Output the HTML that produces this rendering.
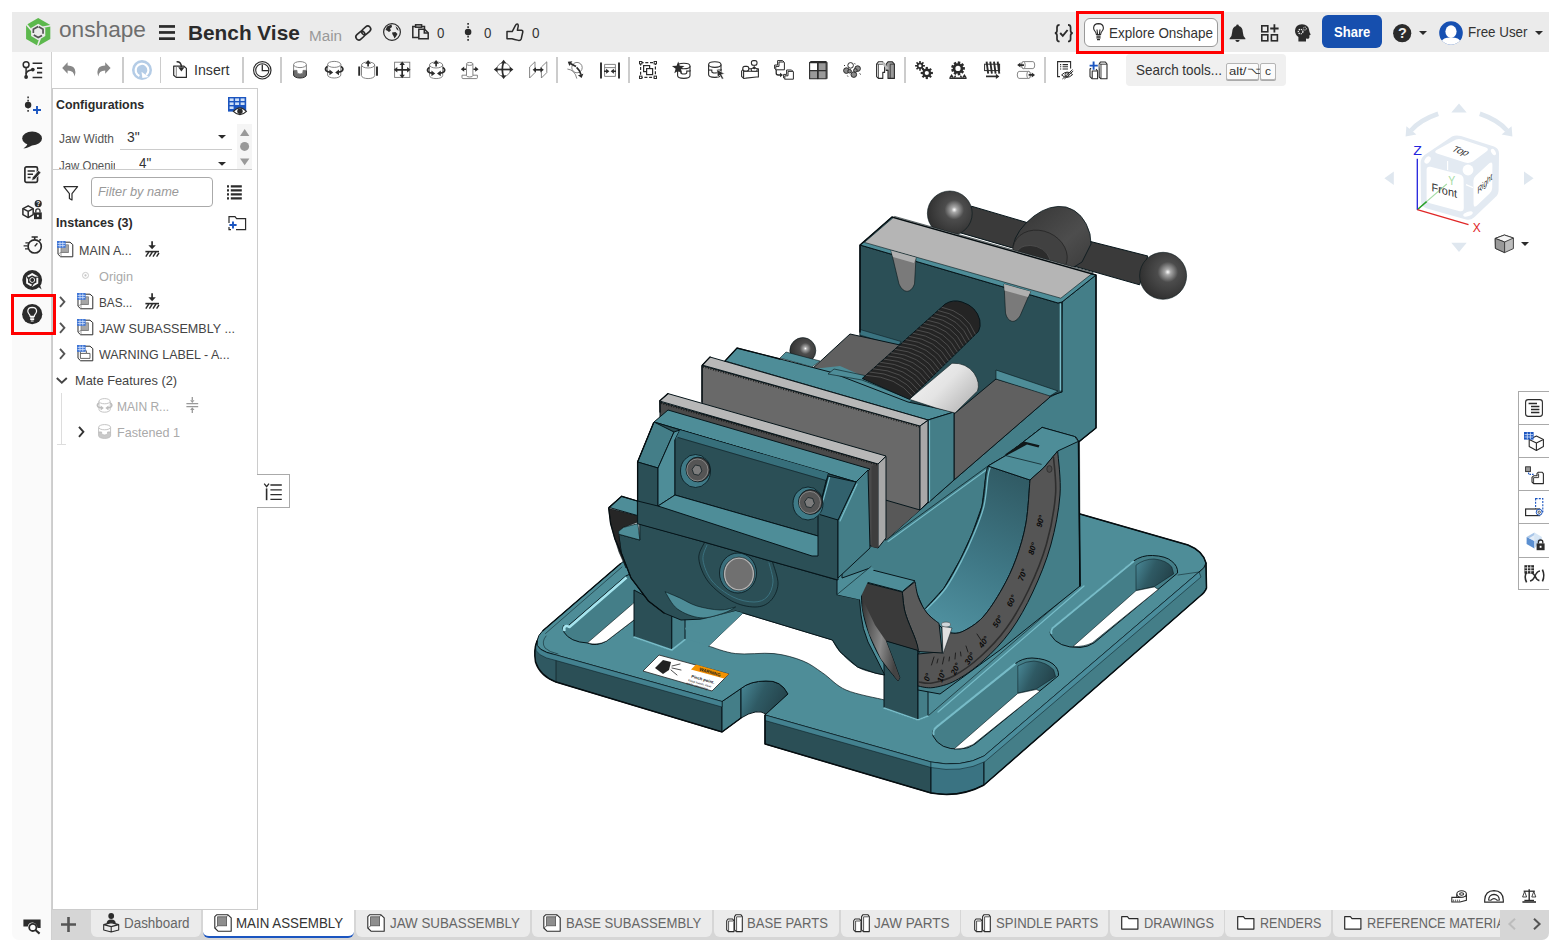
<!DOCTYPE html>
<html lang="en"><head><meta charset="utf-8"><title>Bench Vise | Onshape</title>
<style>
html,body{margin:0;padding:0;background:#fff;}
body{width:1549px;height:940px;position:relative;overflow:hidden;font-family:"Liberation Sans",sans-serif;}
.b{position:absolute;box-sizing:border-box;display:block;}
.t{position:absolute;white-space:nowrap;display:block;}
svg{overflow:visible;}
</style></head><body>
<div class="b" style="left:12px;top:12px;width:1537px;height:40px;background:#ebebeb;"></div>
<span class="t" style="left:59.4px;top:19.4px;font-size:22.6px;line-height:22.6px;color:#6e6e6e;transform-origin:0 0;transform:scaleX(1.0033);">onshape</span>
<span class="t" style="left:187.6px;top:23.0px;font-size:20.5px;line-height:20.5px;color:#2b2b2b;transform-origin:0 0;transform:scaleX(1.0150);font-weight:bold;">Bench Vise</span>
<span class="t" style="left:308.6px;top:27.9px;font-size:15.5px;line-height:15.5px;color:#999;transform-origin:0 0;transform:scaleX(0.9823);">Main</span>
<span class="t" style="left:436.6px;top:25.7px;font-size:14px;line-height:14px;color:#333;transform-origin:0 0;transform:scaleX(0.9504);">0</span>
<span class="t" style="left:484.0px;top:25.7px;font-size:14px;line-height:14px;color:#333;transform-origin:0 0;transform:scaleX(0.9504);">0</span>
<span class="t" style="left:531.5px;top:25.7px;font-size:14px;line-height:14px;color:#333;transform-origin:0 0;transform:scaleX(0.9632);">0</span>
<div class="b" style="left:1084px;top:17.5px;width:134px;height:29.5px;background:#fff;border:1px solid #999;border-radius:6px;"></div>
<span class="t" style="left:1109.0px;top:25.3px;font-size:15px;line-height:15px;color:#333;transform-origin:0 0;transform:scaleX(0.8973);">Explore Onshape</span>
<div class="b" style="left:1076px;top:10.5px;width:147.5px;height:43px;border:3px solid #f00;"></div>
<div class="b" style="left:1322px;top:15px;width:60px;height:33px;background:#164fae;border-radius:6px;"></div>
<span class="t" style="left:1334.0px;top:24.3px;font-size:15px;line-height:15px;color:#fff;transform-origin:0 0;transform:scaleX(0.8683);font-weight:bold;">Share</span>
<span class="t" style="left:1468.0px;top:24.3px;font-size:15px;line-height:15px;color:#333;transform-origin:0 0;transform:scaleX(0.8923);">Free User</span>
<div class="b" style="left:122.05px;top:57px;width:1.5px;height:25.5px;background:#ccc;"></div>
<div class="b" style="left:159.85px;top:57px;width:1.5px;height:25.5px;background:#ccc;"></div>
<div class="b" style="left:242.05px;top:57px;width:1.5px;height:25.5px;background:#ccc;"></div>
<div class="b" style="left:280.05px;top:57px;width:1.5px;height:25.5px;background:#ccc;"></div>
<div class="b" style="left:556.05px;top:57px;width:1.5px;height:25.5px;background:#ccc;"></div>
<div class="b" style="left:628.25px;top:57px;width:1.5px;height:25.5px;background:#ccc;"></div>
<div class="b" style="left:904.25px;top:57px;width:1.5px;height:25.5px;background:#ccc;"></div>
<div class="b" style="left:1044.25px;top:57px;width:1.5px;height:25.5px;background:#ccc;"></div>
<span class="t" style="left:194.0px;top:62.3px;font-size:15px;line-height:15px;color:#333;transform-origin:0 0;transform:scaleX(0.9436);">Insert</span>
<div class="b" style="left:1126px;top:54px;width:160px;height:32px;background:#f0f0f0;border-radius:4px;"></div>
<span class="t" style="left:1136.0px;top:62.3px;font-size:15px;line-height:15px;color:#333;transform-origin:0 0;transform:scaleX(0.8969);">Search tools...</span>
<div class="b" style="left:1226px;top:62.5px;width:32.5px;height:17.5px;background:#fbfbfb;border:1px solid #b5b5b5;border-radius:2px;box-shadow:0 1px 0 #aaa;"></div>
<span class="t" style="left:1229.0px;top:65.7px;font-size:11px;line-height:11px;color:#333;transform-origin:0 0;transform:scaleX(1.1926);">alt/</span>
<span class="t" style="left:1246.8px;top:67.4px;font-size:8.5px;line-height:8.5px;color:#333;transform-origin:0 0;transform:scaleX(1.3804);">⌥</span>
<div class="b" style="left:1259.5px;top:62.5px;width:16px;height:17.5px;background:#fbfbfb;border:1px solid #b5b5b5;border-radius:2px;box-shadow:0 1px 0 #aaa;"></div>
<span class="t" style="left:1264.5px;top:65.7px;font-size:11px;line-height:11px;color:#333;transform-origin:0 0;transform:scaleX(1.0909);">c</span>
<div class="b" style="left:12px;top:52px;width:39.5px;height:888px;background:#fafafa;border-right:1px solid #d0d0d0;border-bottom-left-radius:7px;"></div>
<div class="b" style="left:51.5px;top:88px;width:206px;height:822px;background:#fff;border:1px solid #ccc;border-left-color:#ccc;"></div>
<span class="t" style="left:56.2px;top:97.8px;font-size:13.4px;line-height:13.4px;color:#2b2b2b;transform-origin:0 0;transform:scaleX(0.9257);font-weight:bold;">Configurations</span>
<span class="t" style="left:59.3px;top:132.0px;font-size:13px;line-height:13px;color:#555;transform-origin:0 0;transform:scaleX(0.9173);">Jaw Width</span>
<span class="t" style="left:126.5px;top:129.5px;font-size:14.4px;line-height:14.4px;color:#333;transform-origin:0 0;transform:scaleX(0.9680);">3&quot;</span>
<div class="b" style="left:120px;top:149px;width:112px;height:1px;background:#ccc;"></div>
<div class="b" style="left:237px;top:124px;width:15px;height:45px;background:#f5f5f5;"></div>
<div class="b" style="left:52px;top:150px;width:63px;height:19px;overflow:hidden;"><span class="t" style="left:7.3px;top:8.5px;font-size:13px;line-height:13px;color:#555;transform-origin:0 0;transform:scaleX(0.88)">Jaw Opening</span></div>
<div class="b" style="left:130px;top:150px;width:60px;height:19px;overflow:hidden;"><span class="t" style="left:8.7px;top:6.3px;font-size:14.4px;line-height:14.4px;color:#333;transform-origin:0 0;transform:scaleX(0.93)">4"</span></div>
<div class="b" style="left:52px;top:169px;width:200px;height:1px;background:#ccc;"></div>
<div class="b" style="left:91px;top:177px;width:122px;height:30px;background:#fff;border:1px solid #aaa;border-radius:4px;"></div>
<span class="t" style="left:98.0px;top:185.3px;font-size:13.4px;line-height:13.4px;color:#999;transform-origin:0 0;transform:scaleX(0.9541);font-style:italic;">Filter by name</span>
<span class="t" style="left:56.2px;top:215.9px;font-size:13.4px;line-height:13.4px;color:#2b2b2b;transform-origin:0 0;transform:scaleX(0.9375);font-weight:bold;">Instances (3)</span>
<span class="t" style="left:78.5px;top:243.8px;font-size:13.2px;line-height:13.2px;color:#444;transform-origin:0 0;transform:scaleX(0.9454);">MAIN A...</span>
<span class="t" style="left:98.6px;top:269.8px;font-size:13.2px;line-height:13.2px;color:#aaa;transform-origin:0 0;transform:scaleX(0.9656);">Origin</span>
<span class="t" style="left:98.6px;top:295.6px;font-size:13.2px;line-height:13.2px;color:#444;transform-origin:0 0;transform:scaleX(0.8927);">BAS...</span>
<span class="t" style="left:98.6px;top:321.5px;font-size:13.2px;line-height:13.2px;color:#444;transform-origin:0 0;transform:scaleX(0.9524);">JAW SUBASSEMBLY ...</span>
<span class="t" style="left:98.6px;top:347.5px;font-size:13.2px;line-height:13.2px;color:#444;transform-origin:0 0;transform:scaleX(0.9452);">WARNING LABEL - A...</span>
<span class="t" style="left:75.4px;top:373.5px;font-size:13.2px;line-height:13.2px;color:#444;transform-origin:0 0;transform:scaleX(0.9742);">Mate Features (2)</span>
<span class="t" style="left:117.4px;top:399.8px;font-size:13.2px;line-height:13.2px;color:#aaa;transform-origin:0 0;transform:scaleX(0.9126);">MAIN R...</span>
<span class="t" style="left:117.4px;top:425.8px;font-size:13.2px;line-height:13.2px;color:#aaa;transform-origin:0 0;transform:scaleX(0.9539);">Fastened 1</span>
<div class="b" style="left:61px;top:393px;width:1px;height:51.5px;background:#ddd;"></div>
<div class="b" style="left:57px;top:444px;width:9px;height:1px;background:#ddd;"></div>
<div class="b" style="left:10.5px;top:293.7px;width:45px;height:41px;border:3px solid #f00;"></div>
<div class="b" style="left:257px;top:474px;width:33px;height:34px;background:#fff;border:1px solid #aaa;border-left:none;"></div>
<div class="b" style="left:1517.5px;top:391px;width:32px;height:199px;background:#fff;border:1px solid #aaa;border-right:none;"></div>
<div class="b" style="left:1518px;top:424px;width:31px;height:1px;background:#aaa;"></div>
<div class="b" style="left:1518px;top:457px;width:31px;height:1px;background:#aaa;"></div>
<div class="b" style="left:1518px;top:490px;width:31px;height:1px;background:#aaa;"></div>
<div class="b" style="left:1518px;top:523px;width:31px;height:1px;background:#aaa;"></div>
<div class="b" style="left:1518px;top:556.5px;width:31px;height:1px;background:#aaa;"></div>
<div class="b" style="left:51.5px;top:909.5px;width:1497.5px;height:30.5px;background:#d6d6d6;border-bottom-right-radius:7px;"></div>
<div class="b" style="left:91px;top:909.5px;width:109.6px;height:27.5px;background:#ebebeb;border-radius:0 0 6px 6px;"></div>
<span class="t" style="left:124.4px;top:916.3px;font-size:14.7px;line-height:14.7px;color:#666;transform-origin:0 0;transform:scaleX(0.9122);">Dashboard</span>
<div class="b" style="left:203px;top:909.5px;width:151px;height:28.5px;background:#fff;border-bottom:2px solid #1b55c0;border-radius:0 0 6px 6px;"></div>
<span class="t" style="left:236.4px;top:916.3px;font-size:14.7px;line-height:14.7px;color:#333;transform-origin:0 0;transform:scaleX(0.9071);">MAIN ASSEMBLY</span>
<div class="b" style="left:356px;top:909.5px;width:174px;height:27.5px;background:#ebebeb;border-radius:0 0 6px 6px;"></div>
<span class="t" style="left:390.0px;top:916.3px;font-size:14.7px;line-height:14.7px;color:#666;transform-origin:0 0;transform:scaleX(0.9094);">JAW SUBASSEMBLY</span>
<div class="b" style="left:531.6px;top:909.5px;width:180.39999999999998px;height:27.5px;background:#ebebeb;border-radius:0 0 6px 6px;"></div>
<span class="t" style="left:565.6px;top:916.3px;font-size:14.7px;line-height:14.7px;color:#666;transform-origin:0 0;transform:scaleX(0.8926);">BASE SUBASSEMBLY</span>
<div class="b" style="left:713.6px;top:909.5px;width:125.39999999999998px;height:27.5px;background:#ebebeb;border-radius:0 0 6px 6px;"></div>
<span class="t" style="left:747.4px;top:916.3px;font-size:14.7px;line-height:14.7px;color:#666;transform-origin:0 0;transform:scaleX(0.8905);">BASE PARTS</span>
<div class="b" style="left:840.6px;top:909.5px;width:119.0px;height:27.5px;background:#ebebeb;border-radius:0 0 6px 6px;"></div>
<span class="t" style="left:874.4px;top:916.3px;font-size:14.7px;line-height:14.7px;color:#666;transform-origin:0 0;transform:scaleX(0.9195);">JAW PARTS</span>
<div class="b" style="left:961.2px;top:909.5px;width:146.79999999999995px;height:27.5px;background:#ebebeb;border-radius:0 0 6px 6px;"></div>
<span class="t" style="left:995.6px;top:916.3px;font-size:14.7px;line-height:14.7px;color:#666;transform-origin:0 0;transform:scaleX(0.8932);">SPINDLE PARTS</span>
<div class="b" style="left:1109.6px;top:909.5px;width:114.0px;height:27.5px;background:#ebebeb;border-radius:0 0 6px 6px;"></div>
<span class="t" style="left:1143.6px;top:916.3px;font-size:14.7px;line-height:14.7px;color:#666;transform-origin:0 0;transform:scaleX(0.8717);">DRAWINGS</span>
<div class="b" style="left:1225.2px;top:909.5px;width:105.79999999999995px;height:27.5px;background:#ebebeb;border-radius:0 0 6px 6px;"></div>
<span class="t" style="left:1259.6px;top:916.3px;font-size:14.7px;line-height:14.7px;color:#666;transform-origin:0 0;transform:scaleX(0.8542);">RENDERS</span>
<div class="b" style="left:1332.6px;top:909.5px;width:167.4px;height:27.5px;background:#ebebeb;border-radius:0 0 0 6px;overflow:hidden;"><span class="t" style="left:34px;top:6.8px;font-size:14.7px;line-height:14.7px;color:#666;transform-origin:0 0;transform:scaleX(0.868)">REFERENCE MATERIALS</span></div>
<svg class="b" style="left:25.7px;top:17.9px;" width="24.4" height="28" viewBox="0 0 24.4 28"><polygon points="12.20,0.00 0.08,7.00 0.08,21.00 12.20,28.00 24.32,21.00 24.32,7.00" fill="#5cb84d"/><polygon points="12.20,5.80 5.10,9.90 5.10,18.10 12.20,22.20 19.30,18.10 19.30,9.90" fill="#ebebeb"/><line x1="16.55" y1="9.17" x2="25.68" y2="7.42" stroke="#ebebeb" stroke-width="1.6"/><line x1="5.84" y1="12.65" x2="-0.24" y2="5.61" stroke="#ebebeb" stroke-width="1.6"/><line x1="14.21" y1="20.18" x2="11.15" y2="28.96" stroke="#ebebeb" stroke-width="1.6"/><polygon points="12.20,8.40 7.35,11.20 7.35,16.80 12.20,19.60 17.05,16.80 17.05,11.20" fill="none" stroke="#555" stroke-width="1.7" stroke-dasharray="9.5 2.2"/></svg>
<svg class="b" style="left:159px;top:25px;" width="16" height="15" viewBox="0 0 16 15"><g fill="#2b2b2b"><rect x="0" y="0.1" width="16" height="2.7"/><rect x="0" y="6.1" width="16" height="2.7"/><rect x="0" y="12.3" width="16" height="2.7"/></g></svg>
<svg class="b" style="left:355.8px;top:25.9px;" width="14.6" height="14" viewBox="0 0 14.6 14"><g fill="none" stroke="#2b2b2b" stroke-width="1.6" transform="rotate(-42 7.3 7)"><rect x="-1.6" y="4" width="10" height="6" rx="3"/><rect x="6.2" y="4" width="10" height="6" rx="3"/></g></svg>
<svg class="b" style="left:383px;top:22.8px;" width="18" height="18" viewBox="0 0 18 18"><circle cx="9" cy="9" r="8.4" fill="none" stroke="#2b2b2b" stroke-width="1.2"/><path d="M4 3.5 L8.5 1.5 L9 4 L7 5.5 L8 7.5 L6 9 L4 7.5 L2.5 7 Z M9 9.5 L12.5 9 L14.5 11 L13 13.5 L11.5 15.5 L10.5 13 L9.5 11.5 Z M12.5 3 L15 5.5 L15.5 8 L13.5 6 Z" fill="#2b2b2b"/></svg>
<svg class="b" style="left:412.2px;top:24px;" width="17" height="15.6" viewBox="0 0 17 15.6"><g fill="none" stroke="#2b2b2b" stroke-width="1.5"><path d="M4 2.5 H0.8 V13.6 H6"/><path d="M9.5 2.5 H12.5 V5"/><rect x="3.6" y="0.8" width="6" height="2.4" fill="#ebebeb"/><path d="M6.8 5.2 H12.5 L16.2 8.8 V14.8 H6.8 Z" fill="#ebebeb"/><path d="M12.3 5.4 V9 H16"/></g></svg>
<svg class="b" style="left:463px;top:23px;" width="10" height="18" viewBox="0 0 10 18"><line x1="5.1" y1="0" x2="5.1" y2="18" stroke="#2b2b2b" stroke-width="1.6" stroke-dasharray="1.7 1.5"/><circle cx="5.1" cy="9" r="3.3" fill="#2b2b2b"/></svg>
<svg class="b" style="left:506px;top:22.8px;" width="17.7" height="18.2" viewBox="0 0 17.7 18.2"><path d="M1 8.6 H6.2 L9.6 2.2 Q10.4 0.6 11.8 1.2 Q12.6 2.4 12 4.4 L11.4 7.2 H15.4 Q17 7.4 16.8 9 L15.2 16 Q14.6 17.6 12.6 17.4 Q8 16.4 6 15.8 H1 Z" fill="none" stroke="#2b2b2b" stroke-width="1.5" stroke-linejoin="round"/></svg>
<svg class="b" style="left:1054px;top:23.6px;" width="19.6" height="18.4" viewBox="0 0 19.6 18.4"><g fill="none" stroke="#2b2b2b" stroke-width="1.7"><path d="M5.6 0.9 Q3 0.9 3 3.4 V6.6 Q3 9.2 0.8 9.2 Q3 9.2 3 11.8 V15 Q3 17.5 5.6 17.5"/><path d="M14 0.9 Q16.6 0.9 16.6 3.4 V6.6 Q16.6 9.2 18.8 9.2 Q16.6 9.2 16.6 11.8 V15 Q16.6 17.5 14 17.5"/><path d="M6.2 9 L8.8 11.8 L13.6 6" stroke-width="1.9"/></g></svg>
<svg class="b" style="left:1093px;top:23px;" width="11" height="18" viewBox="0 0 11 18"><g fill="none" stroke="#2b2b2b" stroke-width="1.1"><path d="M3.4 11.5 Q3.2 9.6 1.8 8 Q0.6 6.6 0.6 5 Q0.8 0.7 5.5 0.6 Q10.2 0.7 10.4 5 Q10.4 6.6 9.2 8 Q7.8 9.6 7.6 11.5 Z"/><path d="M4.6 11.4 L4 6.5 M6.4 11.4 L7 6.5"/><path d="M3.4 13.2 H7.6 M3.4 14.9 H7.6 M4 16.6 H7" stroke-width="1.2"/></g></svg>
<svg class="b" style="left:1229px;top:23.6px;" width="17" height="18.4" viewBox="0 0 17 18.4"><path d="M8.5 0.6 Q9.8 0.6 9.9 2 Q13.6 3 13.8 8 Q13.9 12 16.4 14.4 V15.3 H0.6 V14.4 Q3.1 12 3.2 8 Q3.4 3 7.1 2 Q7.2 0.6 8.5 0.6 Z M6.3 16 H10.7 Q10.3 18 8.5 18 Q6.7 18 6.3 16 Z" fill="#2b2b2b"/></svg>
<svg class="b" style="left:1260.6px;top:24px;" width="18" height="17.6" viewBox="0 0 18 17.6"><g fill="none" stroke="#2b2b2b" stroke-width="1.6"><rect x="0.8" y="1.8" width="6" height="6"/><rect x="0.8" y="10.8" width="6" height="6"/><rect x="10.4" y="10.8" width="6" height="6"/><path d="M13.4 0.3 V8.6 M9.2 4.5 H17.6" stroke-width="1.8"/></g></svg>
<svg class="b" style="left:1293.6px;top:24px;" width="17" height="17.6" viewBox="0 0 17 17.6"><path d="M8 0.3 Q14.6 0.5 15.2 6.5 Q15.3 8 16.6 10.2 Q16.8 11 15.4 11.2 V13.4 Q15.2 15 13.4 14.8 L12 14.6 V17.4 H4.4 V13 Q1 10.6 1 6.8 Q1.4 0.6 8 0.3 Z" fill="#2b2b2b"/><circle cx="6.6" cy="7.6" r="2.3" fill="none" stroke="#ebebeb" stroke-width="1.3" stroke-dasharray="1.2 0.8"/><circle cx="10.9" cy="4.6" r="1.5" fill="none" stroke="#ebebeb" stroke-width="1" stroke-dasharray="0.9 0.7"/></svg>
<svg class="b" style="left:1393px;top:23.8px;" width="18.4" height="18.4" viewBox="0 0 18.4 18.4"><circle cx="9.2" cy="9.2" r="9.1" fill="#2b2b2b"/></svg>
<span class="t" style="left:1397.8px;top:24.9px;font-size:15.5px;line-height:15.5px;color:#ebebeb;transform-origin:0 0;transform:scaleX(0.9294);font-weight:bold;">?</span>
<svg class="b" style="left:1419px;top:30.6px;" width="8" height="4" viewBox="0 0 8 4"><polygon points="0,0 8,0 4,4" fill="#2b2b2b"/></svg>
<svg class="b" style="left:1535px;top:30.6px;" width="8" height="4" viewBox="0 0 8 4"><polygon points="0,0 8,0 4,4" fill="#2b2b2b"/></svg>
<svg class="b" style="left:1439px;top:21px;" width="24" height="24" viewBox="0 0 24 24"><defs><clipPath id="avc"><circle cx="12" cy="12" r="11.8"/></clipPath></defs><circle cx="12" cy="12" r="11.8" fill="#1650b2"/><g clip-path="url(#avc)" fill="#fff"><ellipse cx="12" cy="10.6" rx="5.6" ry="6.3"/><path d="M1.6 24 Q2 17.8 8 16.8 H16 Q22 17.8 22.4 24 Z"/></g></svg>
<svg class="b" style="left:62px;top:62px;" width="13.8" height="14.6" viewBox="0 0 13.8 14.6"><path d="M5.6 0.2 V3.6 Q13 3.6 13.4 10 Q13.4 12.6 12.4 14.4 Q12.2 8.6 5.6 8.4 V11.8 L0.2 6 Z" fill="#888"/></svg>
<svg class="b" style="left:97.2px;top:62px;" width="13.8" height="14.6" viewBox="0 0 13.8 14.6"><path d="M8.2 0.2 V3.6 Q0.8 3.6 0.4 10 Q0.4 12.6 1.4 14.4 Q1.6 8.6 8.2 8.4 V11.8 L13.6 6 Z" fill="#888"/></svg>
<svg class="b" style="left:131.9px;top:59.8px;" width="20" height="20" viewBox="0 0 20 20"><circle cx="10" cy="10" r="10" fill="#b4cce6"/><path d="M14.2 15 A6.4 6.4 0 1 0 7.4 16" fill="none" stroke="#fff" stroke-width="2.2"/><polygon points="10,11.2 16.4,17.6 10,17.6" fill="#fff" transform="rotate(-8 13 15)"/></svg>
<svg class="b" style="left:172.9px;top:61px;" width="14" height="17" viewBox="0 0 14 17"><g fill="none" stroke="#2b2b2b" stroke-width="1.2" stroke-linejoin="round"><path d="M3.4 5.2 H11 L13.4 7.4 V16.4 H3.2 L0.7 14.2 V5 Z"/><path d="M3.3 5.4 V16.2" stroke="#777" stroke-width="0.9"/><path d="M3.6 0.8 Q8.4 0.6 8.4 6" stroke-width="1.5"/></g><polygon points="5.2,6.2 11.6,6.2 8.4,10.4" fill="#2b2b2b"/></svg>
<svg class="b" style="left:253px;top:60.5px;" width="18.6" height="18.6" viewBox="0 0 18.6 18.6"><circle cx="9.3" cy="9.3" r="8.7" fill="none" stroke="#2b2b2b" stroke-width="1.2"/><circle cx="9.3" cy="9.3" r="6.6" fill="none" stroke="#2b2b2b" stroke-width="1.1"/><path d="M9.3 3.6 V9.6 H15.6" fill="none" stroke="#2b2b2b" stroke-width="1.3"/></svg>
<svg class="b" style="left:293px;top:61px;" width="14" height="18" viewBox="0 0 14 18"><path d="M0.6 9 V14 A6.4 3 0 0 0 13.4 14 V9 Z" fill="#6e6e6e" stroke="#2b2b2b" stroke-width="1"/><path d="M0.6 3.6 V9.4 H4 V11 Q4 13 7 13 Q10 13 10 11 V9.4 H13.4 V3.6" fill="#fff" stroke="#777" stroke-width="0.9"/><ellipse cx="7" cy="3.6" rx="6.4" ry="3" fill="#fff" stroke="#777" stroke-width="0.9"/></svg>
<svg class="b" style="left:323.7px;top:61px;" width="20.5" height="17.5" viewBox="0 0 20.5 17.5"><path d="M3.60 3.40 V14.00 A6.60 3.00 0 0 0 16.80 14.00 V3.40" fill="#fff" stroke="#777" stroke-width="0.9"/><ellipse cx="10.20" cy="3.40" rx="6.60" ry="3.00" fill="#fff" stroke="#777" stroke-width="0.9"/><g fill="none" stroke="#2b2b2b" stroke-width="1.7"><path d="M3.4 5.4 Q0.6 7.4 2 9.6 Q3.4 11 6.4 11.2"/><path d="M17 5.4 Q19.8 7.4 18.4 9.6 Q17 11 14 11.2"/></g><g fill="#2b2b2b"><polygon points="9.20,11.40 5.43,14.30 5.43,8.50"/><polygon points="11.20,11.40 14.97,8.50 14.97,14.30"/></g></svg>
<svg class="b" style="left:357.8px;top:60.2px;" width="20.2" height="18.6" viewBox="0 0 20.2 18.6"><path d="M3.50 5.00 V15.60 A6.60 3.00 0 0 0 16.70 15.60 V5.00" fill="#fff" stroke="#777" stroke-width="0.9"/><ellipse cx="10.10" cy="5.00" rx="6.60" ry="3.00" fill="#fff" stroke="#777" stroke-width="0.9"/><g stroke="#2b2b2b" stroke-width="1.9"><path d="M1.2 6.4 V15.8 M19 6.4 V15.8"/><path d="M10.1 3 V6.6" stroke-width="1.7"/></g><g fill="#2b2b2b"><polygon points="10.10,0.00 13.00,3.77 7.20,3.77"/></g></svg>
<svg class="b" style="left:393.9px;top:61px;" width="16.4" height="17.5" viewBox="0 0 16.4 17.5"><rect x="0.6" y="1.2" width="15.2" height="15.2" fill="none" stroke="#777" stroke-width="0.9"/><g stroke="#2b2b2b" stroke-width="1.7"><path d="M8.2 3 V14.6 M2.4 8.8 H14"/></g><g fill="#2b2b2b"><polygon points="8.20,0.40 10.90,3.91 5.50,3.91"/><polygon points="8.20,17.20 5.50,13.69 10.90,13.69"/><polygon points="-0.20,8.80 3.31,6.10 3.31,11.50"/><polygon points="16.60,8.80 13.09,11.50 13.09,6.10"/></g></svg>
<svg class="b" style="left:426px;top:60.2px;" width="20.2" height="18.6" viewBox="0 0 20.2 18.6"><path d="M3.50 5.00 V15.60 A6.60 3.00 0 0 0 16.70 15.60 V5.00" fill="#fff" stroke="#777" stroke-width="0.9"/><ellipse cx="10.10" cy="5.00" rx="6.60" ry="3.00" fill="#fff" stroke="#777" stroke-width="0.9"/><g fill="none" stroke="#2b2b2b" stroke-width="1.7"><path d="M3.4 7.4 Q0.6 9.4 2 11.6 Q3.4 13 6.4 13.2"/><path d="M16.8 7.4 Q19.6 9.4 18.2 11.6 Q16.8 13 13.8 13.2"/><path d="M10.1 3 V6.4"/></g><g fill="#2b2b2b"><polygon points="9.20,13.40 5.43,16.30 5.43,10.50"/><polygon points="11.00,13.40 14.77,10.50 14.77,16.30"/><polygon points="10.10,0.00 13.00,3.77 7.20,3.77"/></g></svg>
<svg class="b" style="left:461.3px;top:61.7px;" width="17.4" height="17.1" viewBox="0 0 17.4 17.1"><path d="M1 13.2 H16.4 V15.6 Q16.4 16.6 15.4 16.6 H2 Q1 16.6 1 15.6 Z" fill="#fff" stroke="#777" stroke-width="0.9"/><path d="M5.50 1.90 V13.50 A3.20 1.50 0 0 0 11.90 13.50 V1.90" fill="#fff" stroke="#777" stroke-width="0.9"/><ellipse cx="8.70" cy="1.90" rx="3.20" ry="1.50" fill="#fff" stroke="#777" stroke-width="0.9"/><g stroke="#2b2b2b" stroke-width="1.6"><path d="M2 7.2 H5 M12.4 7.2 H15.4"/></g><g fill="#2b2b2b"><polygon points="-0.20,7.20 3.18,4.60 3.18,9.80"/><polygon points="17.60,7.20 14.22,9.80 14.22,4.60"/></g></svg>
<svg class="b" style="left:494.2px;top:60.2px;" width="19.3" height="18.9" viewBox="0 0 19.3 18.9"><circle cx="9.6" cy="9.5" r="6.8" fill="none" stroke="#777" stroke-width="0.9"/><g fill="none" stroke="#2b2b2b" stroke-width="1.7"><path d="M2.4 9.5 H16.8"/><path d="M9.6 2 Q7 9.5 9.6 17"/></g><g fill="#2b2b2b"><polygon points="9.60,-0.20 12.30,3.31 6.90,3.31"/><polygon points="9.60,19.10 6.90,15.59 12.30,15.59"/><polygon points="-0.20,9.50 3.31,6.80 3.31,12.20"/><polygon points="19.40,9.50 15.89,12.20 15.89,6.80"/></g></svg>
<svg class="b" style="left:528.6px;top:61px;" width="18.4" height="18" viewBox="0 0 18.4 18"><g fill="none" stroke="#777" stroke-width="0.9"><path d="M0.6 6 L6 0.8 V11.6 L0.6 17 Z"/><path d="M12.4 6 L17.8 0.8 V11.6 L12.4 17 Z"/></g><path d="M6 8.8 H12.6" stroke="#2b2b2b" stroke-width="1.7"/><g fill="#2b2b2b"><polygon points="3.60,8.80 6.98,6.20 6.98,11.40"/><polygon points="14.80,8.80 11.42,11.40 11.42,6.20"/></g></svg>
<svg class="b" style="left:567px;top:61px;" width="18" height="18" viewBox="0 0 18 18"><g fill="none" stroke="#777" stroke-width="0.9"><circle cx="10" cy="6.6" r="5.2"/><path d="M0.4 8 Q8 9 9.8 17.6"/></g><g fill="none" stroke="#2b2b2b" stroke-width="1.7"><path d="M3.4 2.4 L9 5.6"/><path d="M9.6 6.4 Q13 9.4 14 13.6"/></g><g fill="#2b2b2b"><polygon points="0.80,0.80 5.37,0.35 2.40,5.10"/><polygon points="14.60,17.00 10.95,14.21 16.36,12.76"/></g></svg>
<svg class="b" style="left:600px;top:61.5px;" width="20" height="17" viewBox="0 0 20 17"><g fill="none" stroke="#777" stroke-width="0.9"><path d="M4.6 2.4 H15.4 V14.4 H4.6 Z M4.6 5.6 H15.4"/></g><g stroke="#2b2b2b"><path d="M1 0.4 V16.6 M19 0.4 V16.6" stroke-width="1.9"/><path d="M4 9.2 H7 M13 9.2 H16" stroke-width="1.6"/></g><g fill="#2b2b2b"><polygon points="9.40,9.20 6.15,11.70 6.15,6.70"/><polygon points="10.60,9.20 13.85,6.70 13.85,11.70"/></g></svg>
<svg class="b" style="left:639px;top:61px;" width="18" height="18" viewBox="0 0 18 18"><rect x="1.6" y="1.6" width="14.8" height="14.8" fill="none" stroke="#2b2b2b" stroke-width="1.2" stroke-dasharray="3 1.7"/><g fill="#fff" stroke="#2b2b2b" stroke-width="1"><rect x="0.5" y="0.5" width="2.4" height="2.4"/><rect x="15.1" y="0.5" width="2.4" height="2.4"/><rect x="0.5" y="15.1" width="2.4" height="2.4"/><rect x="15.1" y="15.1" width="2.4" height="2.4"/><rect x="4.6" y="4.6" width="6" height="6" stroke-width="1.2"/><rect x="7.6" y="7.6" width="6" height="6" stroke-width="1.2"/></g></svg>
<svg class="b" style="left:672.4px;top:60.6px;" width="18.6" height="18.6" viewBox="0 0 18.6 18.6"><path d="M5.6 9.6 V14.6 A6.2 2.8 0 0 0 18 14.6 V9.6 Z" fill="#fff" stroke="#2b2b2b" stroke-width="1.1"/><path d="M5.6 5 V10 H8.8 V11.4 Q8.8 13 11.8 13 Q14.8 13 14.8 11.4 V10 H18 V5" fill="#fff" stroke="#2b2b2b" stroke-width="1.1"/><ellipse cx="11.8" cy="5" rx="6.2" ry="2.8" fill="#fff" stroke="#2b2b2b" stroke-width="1.1"/><polygon points="6.20,0.40 7.79,4.82 12.48,4.96 8.77,7.83 10.08,12.34 6.20,9.70 2.32,12.34 3.63,7.83 -0.08,4.96 4.61,4.82" fill="#2b2b2b"/></svg>
<svg class="b" style="left:707.6px;top:60.6px;" width="17" height="18.6" viewBox="0 0 17 18.6"><path d="M0.6 8.6 V13.6 A6.2 2.8 0 0 0 13 13.6 V8.6 Z" fill="#fff" stroke="#2b2b2b" stroke-width="1.1"/><path d="M0.6 3.6 V9 H3.8 V10.4 Q3.8 12 6.8 12 Q9.8 12 9.8 10.4 V9 H13 V3.6" fill="#fff" stroke="#2b2b2b" stroke-width="1.1"/><ellipse cx="6.8" cy="3.6" rx="6.2" ry="2.8" fill="#fff" stroke="#2b2b2b" stroke-width="1.1"/><polygon points="8.8,8.4 16.6,12.8 13.4,13.4 15.6,17.4 14,18.2 11.8,14.2 9.6,16.2" fill="#2b2b2b" stroke="#fff" stroke-width="0.5"/></svg>
<svg class="b" style="left:741px;top:60px;" width="18" height="19" viewBox="0 0 18 19"><g fill="#fff" stroke="#2b2b2b" stroke-width="1.1" stroke-linejoin="round"><path d="M0.6 11 L2.6 8.8 H17.4 V17 H15.4 L2.6 18.4 L0.6 16.4 Z"/><path d="M2.6 18.2 V11.2 H17.2"/><rect x="1.8" y="6.4" width="6" height="4.6" rx="2"/><rect x="10.4" y="0.6" width="5.6" height="4.6" rx="2"/><rect x="10.2" y="8.2" width="6" height="3" rx="1.4"/></g><path d="M13.2 5.2 V8" stroke="#2b2b2b" stroke-width="1"/><g fill="#2b2b2b"><polygon points="13.20,9.40 11.40,7.06 15.00,7.06"/></g></svg>
<svg class="b" style="left:774px;top:60px;" width="20" height="19.5" viewBox="0 0 20 19.5"><g fill="#fff" stroke="#2b2b2b" stroke-width="1" stroke-linejoin="round"><path d="M3.6 0.6 H8.6 L10.4 2.4 V9.8 H1.8 L0.6 8.6 V5 H3.6 Z M1.8 9.6 V6.4 H5 V2 H10"/><path d="M3.6 0.6 H8.6 L10.4 2.4 V9.8 H1.8 L0.6 8.6 V5 H3.6 Z M1.8 9.6 V6.4 H5 V2 H10" transform="translate(9,9.4)"/></g><path d="M2.2 10 V13 Q2.2 15 4.2 15 H6" fill="none" stroke="#2b2b2b" stroke-width="1.3"/><g fill="#2b2b2b"><polygon points="9.00,15.00 6.01,17.30 6.01,12.70"/></g></svg>
<svg class="b" style="left:808.6px;top:60.6px;" width="18.4" height="18.4" viewBox="0 0 18.4 18.4"><g stroke="#2b2b2b" stroke-width="1.1" stroke-linejoin="round"><rect x="0.6" y="1.6" width="8" height="8" fill="#fff"/><rect x="9.2" y="1.6" width="8" height="8" fill="#9a9a9a"/><rect x="0.6" y="9.8" width="8" height="8" fill="#9a9a9a"/><rect x="9.2" y="9.8" width="8" height="8" fill="#9a9a9a"/><path d="M0.6 1.6 L1.8 0.6 H17 L18 1.6 V17.8" fill="none"/></g></svg>
<svg class="b" style="left:842.6px;top:61.6px;" width="18.8" height="16.6" viewBox="0 0 18.8 16.6"><g stroke="#2b2b2b" stroke-width="1"><circle cx="7.6" cy="3.4" r="2.8" fill="#fff"/><circle cx="3.4" cy="8.6" r="2.8" fill="#8a8a8a"/><circle cx="14.6" cy="6.6" r="2.8" fill="#8a8a8a"/><circle cx="10.8" cy="12.6" r="2.8" fill="#8a8a8a"/><circle cx="6.6" cy="9.2" r="1.8" fill="#8a8a8a"/><circle cx="12.4" cy="8.4" r="1.8" fill="#8a8a8a"/><path d="M1 3 L2 4 M16.6 11.6 L17.8 12.4 M4.4 13.6 L5 14.6 M11.4 1.6 L12.4 2" /></g></svg>
<svg class="b" style="left:876.4px;top:60.8px;" width="19" height="18.2" viewBox="0 0 19 18.2"><g stroke="#2b2b2b" stroke-width="1.1" stroke-linejoin="round"><path d="M0.6 3 L2.4 0.8 H6.6 L8.6 3 V11.4 H6.8 V17.4 H2.4 L0.6 15.6 Z" fill="#fff"/><path d="M2.4 17.2 V3.2 L0.8 3 M2.4 3.2 H8.4" fill="none" stroke-width="0.8"/><path d="M12 9.4 H10.2 V3 L12 0.8 H16.4 L18.4 3 V17.4 H12 Z" fill="#9a9a9a"/><path d="M14.2 3.2 V17.2 M14.2 3.2 H18.2" fill="none" stroke-width="0.8"/></g><path d="M6.6 1.4 L11.6 8" stroke="#bbb" stroke-width="2.4"/></svg>
<svg class="b" style="left:915px;top:61px;" width="18" height="18" viewBox="0 0 18 18"><circle cx="5.00" cy="4.80" r="2.35" fill="none" stroke="#2b2b2b" stroke-width="1.70"/><g stroke="#2b2b2b" stroke-width="1.60"><line x1="7.56" y1="4.80" x2="9.90" y2="4.80"/><line x1="6.81" y1="6.61" x2="8.46" y2="8.26"/><line x1="5.00" y1="7.36" x2="5.00" y2="9.70"/><line x1="3.19" y1="6.61" x2="1.54" y2="8.26"/><line x1="2.44" y1="4.80" x2="0.10" y2="4.80"/><line x1="3.19" y1="2.99" x2="1.54" y2="1.34"/><line x1="5.00" y1="2.24" x2="5.00" y2="-0.10"/><line x1="6.81" y1="2.99" x2="8.46" y2="1.34"/></g><circle cx="11.80" cy="12.00" r="3.25" fill="none" stroke="#2b2b2b" stroke-width="2.30"/><g stroke="#2b2b2b" stroke-width="2.20"><line x1="15.32" y1="12.00" x2="17.90" y2="12.00"/><line x1="14.29" y1="14.49" x2="16.11" y2="16.31"/><line x1="11.80" y1="15.52" x2="11.80" y2="18.10"/><line x1="9.31" y1="14.49" x2="7.49" y2="16.31"/><line x1="8.28" y1="12.00" x2="5.70" y2="12.00"/><line x1="9.31" y1="9.51" x2="7.49" y2="7.69"/><line x1="11.80" y1="8.48" x2="11.80" y2="5.90"/><line x1="14.29" y1="9.51" x2="16.11" y2="7.69"/></g></svg>
<svg class="b" style="left:949px;top:60.6px;" width="18" height="18" viewBox="0 0 18 18"><circle cx="9.00" cy="7.40" r="3.90" fill="none" stroke="#2b2b2b" stroke-width="2.60"/><g stroke="#2b2b2b" stroke-width="2.60"><line x1="13.16" y1="7.40" x2="15.90" y2="7.40"/><line x1="12.19" y1="10.07" x2="14.29" y2="11.84"/><line x1="9.72" y1="11.50" x2="10.20" y2="14.20"/><line x1="6.92" y1="11.00" x2="5.55" y2="13.38"/><line x1="5.09" y1="8.82" x2="2.52" y2="9.76"/><line x1="5.09" y1="5.98" x2="2.52" y2="5.04"/><line x1="6.92" y1="3.80" x2="5.55" y2="1.42"/><line x1="9.72" y1="3.30" x2="10.20" y2="0.60"/><line x1="12.19" y1="4.73" x2="14.29" y2="2.96"/></g><path d="M0.4 17.2 H17.6" stroke="#2b2b2b" stroke-width="1.6"/><path d="M1 16.6 L2.6 14.2 L4.2 16.6 M5.4 16.6 L6.6 14.6 M11.4 14.6 L12.6 16.6 M13.8 16.6 L15.4 14.2 L17 16.6" stroke="#2b2b2b" stroke-width="1.4" fill="none"/></svg>
<svg class="b" style="left:983px;top:60.6px;" width="18.4" height="18.4" viewBox="0 0 18.4 18.4"><rect x="1.6" y="3.2" width="15" height="6.4" fill="#fff" stroke="#2b2b2b" stroke-width="1"/><path d="M3.6 0.6 L5.2 12.6" stroke="#2b2b2b" stroke-width="1.9"/><path d="M7.3 0.6 L8.9 12.6" stroke="#2b2b2b" stroke-width="1.9"/><path d="M11.0 0.6 L12.6 12.6" stroke="#2b2b2b" stroke-width="1.9"/><path d="M14.7 0.6 L16.3 12.6" stroke="#2b2b2b" stroke-width="1.9"/><path d="M3 15.4 H13.6" stroke="#2b2b2b" stroke-width="1.7"/><g fill="#2b2b2b"><polygon points="16.40,15.40 12.89,18.10 12.89,12.70"/></g></svg>
<svg class="b" style="left:1017px;top:61px;" width="18" height="18" viewBox="0 0 18 18"><path d="M6.3 0.6 H15.9 A1.8 3.5 0 0 1 15.9 7.6 H6.3 A1.8 3.5 0 0 1 6.3 0.6 Z" fill="#fff" stroke="#777" stroke-width="0.9"/><ellipse cx="6.4" cy="4.1" rx="1.8" ry="3.5" fill="#fff" stroke="#777" stroke-width="0.9"/><path d="M2.1 10.4 H11.7 A1.8 3.5 0 0 1 11.7 17.4 H2.1 A1.8 3.5 0 0 1 2.1 10.4 Z" fill="#fff" stroke="#777" stroke-width="0.9"/><ellipse cx="11.6" cy="13.9" rx="1.8" ry="3.5" fill="#fff" stroke="#777" stroke-width="0.9"/><path d="M3 4.1 H7 M11.6 13.9 H15.4" stroke="#2b2b2b" stroke-width="1.6"/><g fill="#2b2b2b"><polygon points="0.20,4.10 3.45,1.60 3.45,6.60"/><polygon points="18.00,13.90 14.75,16.40 14.75,11.40"/></g></svg>
<svg class="b" style="left:1057px;top:60.8px;" width="16" height="18.2" viewBox="0 0 16 18.2"><g fill="none" stroke="#2b2b2b"><path d="M3 15.6 H0.6 V0.6 H13.6 V7.6" stroke-width="1.1"/><path d="M3 3.6 H4.2 M3 5.8 H4.2 M3 8 H4.2 M5.6 3.6 H11 M5.6 5.8 H11 M5.6 8 H11" stroke-width="1.1"/><path d="M4.6 14 Q10 8.4 15.6 13.6 Q10 19 4.6 14 Z" stroke-width="1"/><circle cx="10" cy="13.8" r="2" stroke-width="1"/><path d="M5.4 18 L15.6 8.6 M7.4 18 L16.2 10" stroke-width="1"/></g></svg>
<svg class="b" style="left:1088.6px;top:60.6px;" width="18.6" height="18.4" viewBox="0 0 18.6 18.4"><g fill="#fff" stroke="#2b2b2b" stroke-width="1.1" stroke-linejoin="round"><path d="M1 7.6 H2.2 M1 7.6 V15.6 L3.2 17.8 H8.6 V10 L7 8.2"/><path d="M3.2 17.6 V10 H8.4"/><path d="M10.2 3 L11.4 1 H16.4 L18 3 V17.8 H12 L10.2 16 Z"/><path d="M12 17.6 V3.2 L10.4 3 M12 3.2 H17.8" stroke-width="0.9"/></g><path d="M4.6 0.6 V8.8 M0.6 4.6 H8.8" stroke="#1b55c0" stroke-width="1.9"/></svg>
<svg class="b" style="left:22px;top:61px;" width="20.4" height="18.2" viewBox="0 0 20.4 18.2"><g fill="none" stroke="#2b2b2b" stroke-width="1.5"><circle cx="4.1" cy="3.7" r="2.9" fill="#fafafa"/><path d="M4.1 6.6 V15"/><path d="M4.1 13.4 Q4.3 9.6 9.6 9"/><path d="M10.6 2.2 H20.2 M15 7.1 H20.2 M15 11.6 H20.2 M10.6 16.5 H20.2" stroke-width="1.6"/></g><circle cx="4.1" cy="16" r="1.9" fill="#2b2b2b"/><circle cx="10.8" cy="8.6" r="1.9" fill="#2b2b2b"/></svg>
<svg class="b" style="left:24px;top:96px;" width="18" height="18" viewBox="0 0 18 18"><path d="M4.1 0.4 V17.5" stroke="#2b2b2b" stroke-width="1.5" stroke-dasharray="1.8 1.6"/><circle cx="4.1" cy="8.9" r="3.2" fill="#2b2b2b"/><path d="M13 10 V18 M9 14 H17" stroke="#1b55c0" stroke-width="1.9"/></svg>
<svg class="b" style="left:22px;top:130.5px;" width="20.4" height="17.6" viewBox="0 0 20.4 17.6"><ellipse cx="10.1" cy="7.4" rx="9.9" ry="7" fill="#2b2b2b"/><path d="M6 12 Q5 15.4 1.4 17.4 Q8 16.6 10.6 13.4 Z" fill="#2b2b2b"/></svg>
<svg class="b" style="left:24.2px;top:166.4px;" width="17.2" height="17.2" viewBox="0 0 17.2 17.2"><rect x="0.9" y="0.9" width="12.6" height="15.4" rx="1.6" fill="none" stroke="#2b2b2b" stroke-width="1.7"/><path d="M3.6 5 H10.8 M3.6 8.2 H9 M3.6 11.4 H6.6" stroke="#2b2b2b" stroke-width="1.5"/><path d="M7.6 14.6 L8.4 11.4 L14.6 4.4 L17 6.6 L10.8 13.6 Z" fill="#2b2b2b" stroke="#fafafa" stroke-width="0.7"/></svg>
<svg class="b" style="left:22px;top:200px;" width="20.4" height="19.6" viewBox="0 0 20.4 19.6"><g fill="none" stroke="#2b2b2b" stroke-width="1.5" stroke-linejoin="round"><path d="M0.9 8.6 L6.2 5.8 L11.2 8.6 V14.6 L6.2 17.6 L0.9 14.6 Z"/><path d="M0.9 8.6 L6.2 11.4 L11.2 8.6 M6.2 11.4 V17.4"/></g><rect x="12" y="12.4" width="7.8" height="6.8" fill="#2b2b2b"/><path d="M13.8 12.4 V10.8 Q13.8 8.8 15.9 8.8 Q18 8.8 18 10.8 V12.4" fill="none" stroke="#2b2b2b" stroke-width="1.3"/><rect x="15" y="14.8" width="1.8" height="2" fill="#fafafa"/><circle cx="16.2" cy="3.7" r="3.6" fill="#2b2b2b"/></svg>
<span class="t" style="left:36.3px;top:200.6px;font-size:6.5px;line-height:6.5px;color:#fafafa;font-weight:bold;">?</span>
<svg class="b" style="left:22.6px;top:235.6px;" width="19.4" height="18" viewBox="0 0 19.4 18"><g fill="none" stroke="#2b2b2b"><circle cx="11.7" cy="10.4" r="6.6" stroke-width="1.7"/><path d="M11.7 3.6 V1.2 M8.6 1 H14.8 M16.4 4.6 L17.8 3.2" stroke-width="1.6"/><path d="M11.7 10.4 L14.4 7.2" stroke-width="1.4"/><path d="M2.4 6.8 H6 M0.6 9.8 H4.6 M2 12.8 H5.2" stroke-width="1.2"/></g></svg>
<svg class="b" style="left:21.9px;top:269.8px;" width="20.5" height="20" viewBox="0 0 20.5 20"><circle cx="10.2" cy="10" r="9.9" fill="#2b2b2b"/><path d="M14 15 L19.6 19.4 L17 12.6 Z" fill="#2b2b2b"/><polygon points="10.20,4.10 5.09,7.05 5.09,12.95 10.20,15.90 15.31,12.95 15.31,7.05" fill="none" stroke="#fafafa" stroke-width="1.9"/><polygon points="10.20,7.40 7.95,8.70 7.95,11.30 10.20,12.60 12.45,11.30 12.45,8.70" fill="none" stroke="#fafafa" stroke-width="0.9"/><line x1="13.08" y1="7.22" x2="17.25" y2="7.15" stroke="#2b2b2b" stroke-width="1.1"/><line x1="6.35" y1="8.90" x2="4.21" y2="5.32" stroke="#2b2b2b" stroke-width="1.1"/><line x1="11.17" y1="13.88" x2="9.14" y2="17.53" stroke="#2b2b2b" stroke-width="1.1"/></svg>
<svg class="b" style="left:21.9px;top:304.2px;" width="20.4" height="20.4" viewBox="0 0 20.4 20.4"><circle cx="10.2" cy="10.2" r="10.1" fill="#2b2b2b"/><path d="M8.2 12.4 Q8 10.8 6.8 9.6 Q5.8 8.4 5.8 7 Q6 3.4 10.2 3.3 Q14.4 3.4 14.6 7 Q14.6 8.4 13.6 9.6 Q12.4 10.8 12.2 12.4 Z" fill="none" stroke="#fafafa" stroke-width="1.2"/><path d="M8.2 13.8 H12.2 M8.2 15.4 H12.2 M8.8 17 H11.6" stroke="#fafafa" stroke-width="1.2"/></svg>
<svg class="b" style="left:23px;top:919px;" width="18" height="15" viewBox="0 0 18 15"><path d="M0.4 0.6 H17.6 V9 H14.6 Q13.4 3.6 9.6 3.4 Q5.4 3.6 4.8 7.4 H0.4 Z" fill="#2b2b2b"/><circle cx="9.8" cy="8.4" r="3.6" fill="none" stroke="#2b2b2b" stroke-width="1.8"/><path d="M12.4 11 L16.6 14.6" stroke="#2b2b2b" stroke-width="2.1"/></svg>
<svg class="b" style="left:228px;top:97px;" width="18.4" height="19" viewBox="0 0 18.4 19"><rect x="0" y="0" width="18.2" height="14.6" fill="#1b55c0"/><g fill="#cfe0f7"><rect x="1.6" y="1.4" width="4" height="2.6"/><rect x="7.1" y="1.4" width="4" height="2.6"/><rect x="12.6" y="1.4" width="4" height="2.6"/><rect x="1.6" y="5.4" width="4" height="2.6"/><rect x="7.1" y="5.4" width="4" height="2.6"/><rect x="12.6" y="5.4" width="4" height="2.6"/><rect x="1.6" y="9.4" width="4" height="2.6"/></g><path d="M5.4 14.4 Q12 7.2 18.4 14.4 Q12 21 5.4 14.4 Z" fill="#fff" stroke="#2b2b2b" stroke-width="1.2"/><circle cx="12" cy="14.2" r="2.7" fill="#2b2b2b"/></svg>
<svg class="b" style="left:218px;top:135.2px;" width="8" height="3.8" viewBox="0 0 8 3.8"><polygon points="0,0 8,0 4,3.8" fill="#2b2b2b"/></svg>
<svg class="b" style="left:218px;top:162px;" width="8" height="3.8" viewBox="0 0 8 3.8"><polygon points="0,0 8,0 4,3.8" fill="#2b2b2b"/></svg>
<svg class="b" style="left:237px;top:124px;" width="15" height="45" viewBox="0 0 15 45"><g fill="#999"><polygon points="3,12 12.4,12 7.7,5"/><circle cx="7.6" cy="22.4" r="4.5"/><polygon points="3,34.4 12.4,34.4 7.7,41.2"/></g></svg>
<svg class="b" style="left:62.8px;top:185.8px;" width="15.4" height="14.8" viewBox="0 0 15.4 14.8"><path d="M0.8 0.7 H14.6 L9 7.6 V14 L6.4 12.4 V7.6 Z" fill="none" stroke="#2b2b2b" stroke-width="1.2" stroke-linejoin="round"/></svg>
<svg class="b" style="left:226.8px;top:184.8px;" width="15" height="14.6" viewBox="0 0 15 14.6"><g stroke="#2b2b2b" stroke-width="2.1"><path d="M0 1.4 H2 M3.8 1.4 H14.8 M0 5.4 H2 M3.8 5.4 H14.8 M0 9.4 H2 M3.8 9.4 H14.8 M0 13.4 H2 M3.8 13.4 H14.8"/></g></svg>
<svg class="b" style="left:228px;top:215.8px;" width="18.4" height="14.4" viewBox="0 0 18.4 14.4"><path d="M1 7 V0.7 H7 L8.6 2.6 H17.6 V13.6 H8" fill="none" stroke="#2b2b2b" stroke-width="1.2"/><path d="M1 11 V13.6 H3" fill="none" stroke="#2b2b2b" stroke-width="1.2"/><path d="M5 5.4 V12.6 M1.4 9 H8.6" stroke="#1b55c0" stroke-width="1.9"/></svg>
<svg class="b" style="left:57.1px;top:240.9px;" width="16.4" height="16.4" viewBox="0 0 16.4 16.4"><g fill="#fff" stroke="#2b2b2b" stroke-width="1" stroke-linejoin="round"><path d="M1 3.4 L3.4 1.2 H13 L15.8 3.6 V15.8 H3.6 L1 13.2 Z"/></g><rect x="4" y="3.8" width="7.6" height="7.6" fill="#a6a6a6" stroke="#777" stroke-width="0.7"/><path d="M1.2 13 L4 11.4 H11.6 M4 11.4 V15.4" fill="none" stroke="#777" stroke-width="0.7"/><rect x="0" y="0" width="8.6" height="6.8" fill="#3d74d6"/><g stroke="#d6e4fa" stroke-width="0.8"><path d="M0.6 2.4 H8 M0.6 4.6 H8 M3 0.4 V6.4 M5.8 0.4 V6.4"/></g></svg>
<svg class="b" style="left:77px;top:292.8px;" width="16.4" height="16.4" viewBox="0 0 16.4 16.4"><g fill="#fff" stroke="#2b2b2b" stroke-width="1" stroke-linejoin="round"><path d="M1 3.4 L3.4 1.2 H13 L15.8 3.6 V15.8 H3.6 L1 13.2 Z"/></g><rect x="4" y="3.8" width="7.6" height="7.6" fill="#a6a6a6" stroke="#777" stroke-width="0.7"/><path d="M1.2 13 L4 11.4 H11.6 M4 11.4 V15.4" fill="none" stroke="#777" stroke-width="0.7"/><rect x="0" y="0" width="8.6" height="6.8" fill="#3d74d6"/><g stroke="#d6e4fa" stroke-width="0.8"><path d="M0.6 2.4 H8 M0.6 4.6 H8 M3 0.4 V6.4 M5.8 0.4 V6.4"/></g></svg>
<svg class="b" style="left:77px;top:318.8px;" width="16.4" height="16.4" viewBox="0 0 16.4 16.4"><g fill="#fff" stroke="#2b2b2b" stroke-width="1" stroke-linejoin="round"><path d="M1 3.4 L3.4 1.2 H13 L15.8 3.6 V15.8 H3.6 L1 13.2 Z"/></g><rect x="4" y="3.8" width="7.6" height="7.6" fill="#a6a6a6" stroke="#777" stroke-width="0.7"/><path d="M1.2 13 L4 11.4 H11.6 M4 11.4 V15.4" fill="none" stroke="#777" stroke-width="0.7"/><rect x="0" y="0" width="8.6" height="6.8" fill="#3d74d6"/><g stroke="#d6e4fa" stroke-width="0.8"><path d="M0.6 2.4 H8 M0.6 4.6 H8 M3 0.4 V6.4 M5.8 0.4 V6.4"/></g></svg>
<svg class="b" style="left:77px;top:344.8px;" width="16.4" height="16.4" viewBox="0 0 16.4 16.4"><g fill="#fff" stroke="#2b2b2b" stroke-width="1" stroke-linejoin="round"><path d="M1 3.4 L3.4 1.2 H13 L15.8 3.6 V15.8 H3.6 L1 13.2 Z"/></g><path d="M3.4 5.8 H9.4 V8.4 H13 V13.4 H3.4 Z M3.4 8.4 H9.4" fill="#fff" stroke="#555" stroke-width="0.9"/><rect x="0" y="0" width="8.6" height="6.8" fill="#3d74d6"/><g stroke="#d6e4fa" stroke-width="0.8"><path d="M0.6 2.4 H8 M0.6 4.6 H8 M3 0.4 V6.4 M5.8 0.4 V6.4"/></g></svg>
<svg class="b" style="left:144.8px;top:241px;" width="14.2" height="16" viewBox="0 0 14.2 16"><path d="M7.1 0.2 V5" stroke="#2b2b2b" stroke-width="1.7"/><polygon points="3.4,4.2 10.8,4.2 7.1,8.2" fill="#2b2b2b"/><path d="M0.4 10.6 H14" stroke="#2b2b2b" stroke-width="1.6"/><path d="M0.8 15.6 L3.8 11 M4.4 15.6 L7.4 11 M8 15.6 L11 11 M11.6 15.6 L14 12" stroke="#2b2b2b" stroke-width="1.4"/></svg>
<svg class="b" style="left:144.8px;top:293px;" width="14.2" height="16" viewBox="0 0 14.2 16"><path d="M7.1 0.2 V5" stroke="#2b2b2b" stroke-width="1.7"/><polygon points="3.4,4.2 10.8,4.2 7.1,8.2" fill="#2b2b2b"/><path d="M0.4 10.6 H14" stroke="#2b2b2b" stroke-width="1.6"/><path d="M0.8 15.6 L3.8 11 M4.4 15.6 L7.4 11 M8 15.6 L11 11 M11.6 15.6 L14 12" stroke="#2b2b2b" stroke-width="1.4"/></svg>
<svg class="b" style="left:82px;top:272.3px;" width="7" height="7" viewBox="0 0 7 7"><circle cx="3.5" cy="3.4" r="3" fill="none" stroke="#c4c4c4" stroke-width="0.9"/><circle cx="3.5" cy="3.4" r="1.1" fill="#c4c4c4"/></svg>
<svg class="b" style="left:58.8px;top:296.2px;" width="6.4" height="11.6" viewBox="0 0 6.4 11.6"><path d="M1 0.8 L5.4 5.8 L1 10.8" fill="none" stroke="#555" stroke-width="1.9"/></svg>
<svg class="b" style="left:58.8px;top:322.2px;" width="6.4" height="11.6" viewBox="0 0 6.4 11.6"><path d="M1 0.8 L5.4 5.8 L1 10.8" fill="none" stroke="#555" stroke-width="1.9"/></svg>
<svg class="b" style="left:58.8px;top:348.2px;" width="6.4" height="11.6" viewBox="0 0 6.4 11.6"><path d="M1 0.8 L5.4 5.8 L1 10.8" fill="none" stroke="#555" stroke-width="1.9"/></svg>
<svg class="b" style="left:77.8px;top:426.4px;" width="6.4" height="11.6" viewBox="0 0 6.4 11.6"><path d="M1 0.8 L5.4 5.8 L1 10.8" fill="none" stroke="#333" stroke-width="1.9"/></svg>
<svg class="b" style="left:56.2px;top:376.8px;" width="11.6" height="6.8" viewBox="0 0 11.6 6.8"><path d="M0.8 1 L5.8 5.6 L10.8 1" fill="none" stroke="#444" stroke-width="1.9"/></svg>
<svg class="b" style="left:96px;top:398px;" width="17" height="15" viewBox="0 0 17 15"><g fill="#fff" stroke="#bdbdbd" stroke-width="0.9"><path d="M3 3.2 V11.6 A5.6 2.6 0 0 0 14.2 11.6 V3.2"/><ellipse cx="8.6" cy="3.2" rx="5.6" ry="2.6"/></g><g fill="none" stroke="#bdbdbd" stroke-width="1.5"><path d="M3 5 Q0.4 6.6 1.8 8.6 Q3 9.6 5.4 9.8"/><path d="M14.2 5 Q16.8 6.6 15.4 8.6 Q14.2 9.6 11.8 9.8"/></g><g fill="#bdbdbd"><polygon points="7.80,10.00 4.68,12.40 4.68,7.60"/><polygon points="9.40,10.00 12.52,7.60 12.52,12.40"/></g></svg>
<svg class="b" style="left:185.6px;top:397px;" width="12.6" height="16" viewBox="0 0 12.6 16"><g stroke="#999" stroke-width="1.3" fill="none"><path d="M0.4 6.6 H12.2 M0.4 9.6 H12.2 M6.3 0 V3 M6.3 13 V16"/></g><g fill="#999"><polygon points="6.30,6.00 4.10,3.14 8.50,3.14"/><polygon points="6.30,10.20 8.50,13.06 4.10,13.06"/></g></svg>
<svg class="b" style="left:97.6px;top:424px;" width="13.4" height="15" viewBox="0 0 13.4 15"><path d="M0.6 8 V11.8 A6 2.6 0 0 0 12.6 11.8 V8 Z" fill="#c9c9c9" stroke="#bdbdbd" stroke-width="0.9"/><path d="M0.6 3.2 V8 H3.6 V9.2 Q3.6 11 6.6 11 Q9.6 11 9.6 9.2 V8 H12.6 V3.2" fill="#fff" stroke="#bdbdbd" stroke-width="0.9"/><ellipse cx="6.6" cy="3.2" rx="6" ry="2.6" fill="#fff" stroke="#bdbdbd" stroke-width="0.9"/></svg>
<svg class="b" style="left:264px;top:483px;" width="18" height="17.4" viewBox="0 0 18 17.4"><g stroke="#2b2b2b" fill="none"><path d="M2.6 5.4 V17.2" stroke-width="1.6"/><path d="M0.2 0.6 L2.6 3.6 L5 0.6" stroke-width="1.3"/><path d="M6.4 2 H17.8 M6.4 6.8 H17.8 M6.4 11.6 H17.8 M6.4 16.4 H17.8" stroke-width="1.3"/></g></svg>
<svg class="b" style="left:1525px;top:399px;" width="18" height="18" viewBox="0 0 18 18"><rect x="0.6" y="0.6" width="16.8" height="16.8" rx="2.6" fill="#fff" stroke="#2b2b2b" stroke-width="1.1"/><path d="M3.6 4.4 H12 M6 7.4 H14.4 M6 10.4 H14.4 M6 13.4 H14.4" stroke="#2b2b2b" stroke-width="1.5"/></svg>
<svg class="b" style="left:1524px;top:431.6px;" width="20" height="19" viewBox="0 0 20 19"><g fill="#fff" stroke="#2b2b2b" stroke-width="1.1" stroke-linejoin="round"><path d="M5.2 7.4 L12.4 4 L19.4 7.4 V14.6 L12.4 18.4 L5.2 14.6 Z"/><path d="M5.2 7.4 L12.4 11 L19.4 7.4 M12.4 11 V18.2"/></g><rect x="0" y="0" width="9.6" height="7.6" fill="#1b55c0"/><g stroke="#d6e4fa" stroke-width="0.8"><path d="M0.6 2.6 H9 M0.6 5 H9 M3.3 0.4 V7.2 M6.4 0.4 V7.2"/></g></svg>
<svg class="b" style="left:1524.6px;top:465.6px;" width="19" height="18.4" viewBox="0 0 19 18.4"><rect x="0.6" y="0.8" width="4.8" height="4.8" fill="#999" stroke="#2b2b2b" stroke-width="0.9"/><path d="M3.6 6.6 V8.4 H9.6" fill="none" stroke="#1b55c0" stroke-width="1.1" stroke-dasharray="1.6 1"/><path d="M7 11.4 L8.6 9.8 H12 V7.4 L13.4 6.2 H17 L18.4 7.6 V17.6 H8.6 L7 16 Z" fill="#fff" stroke="#2b2b2b" stroke-width="1.1" stroke-linejoin="round"/><path d="M8.6 17.4 V11.6 H13.6 V7.6" fill="none" stroke="#2b2b2b" stroke-width="0.9"/></svg>
<svg class="b" style="left:1524.6px;top:498.4px;" width="19" height="18.6" viewBox="0 0 19 18.6"><rect x="10.6" y="0.6" width="7.2" height="13" fill="none" stroke="#1b55c0" stroke-width="1.1" stroke-dasharray="2 1.2"/><rect x="0.6" y="11" width="14" height="6.6" fill="#fff" stroke="#2b2b2b" stroke-width="1.2"/><circle cx="14.2" cy="14.2" r="3" fill="#fff" stroke="#1b55c0" stroke-width="1"/><circle cx="14.2" cy="14.2" r="1.2" fill="none" stroke="#2b2b2b" stroke-width="0.8"/></svg>
<svg class="b" style="left:1525.6px;top:531.6px;" width="19" height="18.6" viewBox="0 0 19 18.6"><polygon points="8.4,0.4 15.6,4.8 8.4,9" fill="#d7e6f5"/><polygon points="8.4,0.4 0.6,5 8.4,9" fill="#a9c6e8"/><polygon points="0.6,5 8.4,9 8.4,16.6 0.6,12" fill="#5b8fd0"/><polygon points="8.4,9 15.6,4.8 15.6,8 8.4,16.6" fill="#c3d8ef"/><polygon points="8.4,9 3,6.2 8.4,3" fill="#fff" opacity="0.7"/><rect x="10.6" y="11.4" width="8" height="6.8" fill="#2b2b2b"/><path d="M12.4 11.4 V10 Q12.4 8 14.6 8 Q16.8 8 16.8 10 V11.4" fill="none" stroke="#2b2b2b" stroke-width="1.3"/><rect x="13.7" y="13.8" width="1.8" height="2" fill="#fff"/></svg>
<svg class="b" style="left:1523.6px;top:564.6px;" width="21" height="18" viewBox="0 0 21 18"><rect x="0.4" y="0.2" width="9.6" height="8.4" fill="#2b2b2b"/><g stroke="#fff" stroke-width="0.8"><path d="M0.6 2.9 H9.8 M0.6 5.7 H9.8 M3.5 0.4 V8.4 M6.8 0.4 V8.4"/></g><g fill="none" stroke="#2b2b2b" stroke-width="1.6"><path d="M2.6 7 Q-0.2 12 2.6 17.4"/><path d="M18.4 4.6 Q21.2 10.4 18.4 16.4"/><path d="M6 16 Q9 15.6 11 11 Q13 6.2 16 6"/><path d="M7.6 7.6 Q10 9 11 11 Q12.6 15 15.4 15.6"/></g></svg>
<svg class="b" style="left:1451px;top:890px;" width="16" height="12.6" viewBox="0 0 16 12.6"><g fill="#fff" stroke="#2b2b2b" stroke-width="1.1"><path d="M0.8 7.4 H9 L15.4 6 V10.4 L9 12 H0.8 Z"/><ellipse cx="10.6" cy="4" rx="4.8" ry="3.2"/><ellipse cx="10.6" cy="4" rx="2" ry="1.2"/></g><path d="M5.8 4.2 V7.4 M15.4 4.2 V6.4" stroke="#2b2b2b" stroke-width="1.1"/><path d="M2.4 9.6 V11.6 M4.4 9.6 V11.6 M6.4 9.6 V11.6 M8.4 9.6 V11.6" stroke="#2b2b2b" stroke-width="0.7"/></svg>
<svg class="b" style="left:1484px;top:890px;" width="20" height="13" viewBox="0 0 20 13"><path d="M0.7 12.2 V10 Q1.2 0.8 10 0.7 Q18.8 0.8 19.3 10 V12.2 Z" fill="#fff" stroke="#2b2b2b" stroke-width="1.2"/><path d="M4.6 10 Q5 4.6 10 4.4 Q15 4.6 15.4 10 L13 10.2 Q10 7 7 10.2 Z" fill="none" stroke="#2b2b2b" stroke-width="1.1"/></svg>
<svg class="b" style="left:1521.6px;top:889px;" width="14.4" height="13.8" viewBox="0 0 14.4 13.8"><g fill="none" stroke="#2b2b2b"><path d="M7.2 0.2 V11.6" stroke-width="1.4"/><path d="M1.6 2.2 H12.8" stroke-width="1.3"/><path d="M0.4 13 H14" stroke-width="1.6"/><path d="M2.4 11.4 H12" stroke-width="1.2"/><path d="M0.6 8 L2.6 2.4 L4.6 8 Z M9.8 8 L11.8 2.4 L13.8 8 Z" stroke-width="0.9"/></g></svg>
<svg class="b" style="left:61px;top:917px;" width="15" height="15" viewBox="0 0 15 15"><path d="M7.5 0 V15 M0 7.5 H15" stroke="#555" stroke-width="2.6"/></svg>
<svg class="b" style="left:103px;top:913px;" width="16.4" height="19.6" viewBox="0 0 16.4 19.6"><circle cx="8.2" cy="3" r="2.9" fill="#2b2b2b"/><path d="M3.6 10.6 Q3.8 6.6 8.2 6.6 Q12.6 6.6 12.8 10.6 Z" fill="#2b2b2b"/><path d="M0.7 11.6 L8.2 9.6 L15.7 11.6 V17 L8.2 19 L0.7 17 Z M8.2 13.4 V18.8 M0.7 11.6 L8.2 13.6 L15.7 11.6" fill="#ebebeb" stroke="#2b2b2b" stroke-width="1.1" stroke-linejoin="round"/></svg>
<svg class="b" style="left:214px;top:914px;" width="18" height="18" viewBox="0 0 18 18"><path d="M0.8 2.6 L2.6 0.8 H14 L17.2 3.8 V17.2 H4 L0.8 14 Z" fill="#fff" stroke="#2b2b2b" stroke-width="1.1" stroke-linejoin="round"/><rect x="3.6" y="2.8" width="9" height="9" fill="#8e8e8e" stroke="#555" stroke-width="0.8"/><path d="M1 13.8 L3.8 11.8 M12.6 2.8 L14 1" stroke="#555" stroke-width="0.8"/></svg>
<svg class="b" style="left:367px;top:914px;" width="18" height="18" viewBox="0 0 18 18"><path d="M0.8 2.6 L2.6 0.8 H14 L17.2 3.8 V17.2 H4 L0.8 14 Z" fill="#fff" stroke="#2b2b2b" stroke-width="1.1" stroke-linejoin="round"/><rect x="3.6" y="2.8" width="9" height="9" fill="#8e8e8e" stroke="#555" stroke-width="0.8"/><path d="M1 13.8 L3.8 11.8 M12.6 2.8 L14 1" stroke="#555" stroke-width="0.8"/></svg>
<svg class="b" style="left:543px;top:914px;" width="18" height="18" viewBox="0 0 18 18"><path d="M0.8 2.6 L2.6 0.8 H14 L17.2 3.8 V17.2 H4 L0.8 14 Z" fill="#fff" stroke="#2b2b2b" stroke-width="1.1" stroke-linejoin="round"/><rect x="3.6" y="2.8" width="9" height="9" fill="#8e8e8e" stroke="#555" stroke-width="0.8"/><path d="M1 13.8 L3.8 11.8 M12.6 2.8 L14 1" stroke="#555" stroke-width="0.8"/></svg>
<svg class="b" style="left:726px;top:913.6px;" width="17" height="18.4" viewBox="0 0 17 18.4"><g fill="#fff" stroke="#2b2b2b" stroke-width="1.1" stroke-linejoin="round"><path d="M0.7 6.8 L2 5 H6.6 L8 6.8 V17.6 H2.4 L0.7 15.8 Z"/><path d="M2.6 17.4 V7 H7.8" stroke-width="0.8"/><path d="M8.6 2.6 L10 0.7 H14.8 L16.3 2.6 V17.6 H10.4 L8.6 15.8 Z"/><path d="M10.6 17.4 V2.8 H16" stroke-width="0.8"/></g></svg>
<svg class="b" style="left:853px;top:913.6px;" width="17" height="18.4" viewBox="0 0 17 18.4"><g fill="#fff" stroke="#2b2b2b" stroke-width="1.1" stroke-linejoin="round"><path d="M0.7 6.8 L2 5 H6.6 L8 6.8 V17.6 H2.4 L0.7 15.8 Z"/><path d="M2.6 17.4 V7 H7.8" stroke-width="0.8"/><path d="M8.6 2.6 L10 0.7 H14.8 L16.3 2.6 V17.6 H10.4 L8.6 15.8 Z"/><path d="M10.6 17.4 V2.8 H16" stroke-width="0.8"/></g></svg>
<svg class="b" style="left:974px;top:913.6px;" width="17" height="18.4" viewBox="0 0 17 18.4"><g fill="#fff" stroke="#2b2b2b" stroke-width="1.1" stroke-linejoin="round"><path d="M0.7 6.8 L2 5 H6.6 L8 6.8 V17.6 H2.4 L0.7 15.8 Z"/><path d="M2.6 17.4 V7 H7.8" stroke-width="0.8"/><path d="M8.6 2.6 L10 0.7 H14.8 L16.3 2.6 V17.6 H10.4 L8.6 15.8 Z"/><path d="M10.6 17.4 V2.8 H16" stroke-width="0.8"/></g></svg>
<svg class="b" style="left:1121px;top:916px;" width="17.6" height="13.8" viewBox="0 0 17.6 13.8"><path d="M0.7 0.7 H6.4 L8 2.6 H16.9 V13.1 H0.7 Z" fill="#fff" stroke="#2b2b2b" stroke-width="1.2" stroke-linejoin="round"/></svg>
<svg class="b" style="left:1237px;top:916px;" width="17.6" height="13.8" viewBox="0 0 17.6 13.8"><path d="M0.7 0.7 H6.4 L8 2.6 H16.9 V13.1 H0.7 Z" fill="#fff" stroke="#2b2b2b" stroke-width="1.2" stroke-linejoin="round"/></svg>
<svg class="b" style="left:1344px;top:916px;" width="17.6" height="13.8" viewBox="0 0 17.6 13.8"><path d="M0.7 0.7 H6.4 L8 2.6 H16.9 V13.1 H0.7 Z" fill="#fff" stroke="#2b2b2b" stroke-width="1.2" stroke-linejoin="round"/></svg>
<svg class="b" style="left:1508px;top:918px;" width="8" height="12" viewBox="0 0 8 12"><path d="M7 0.8 L1.4 6 L7 11.2" fill="none" stroke="#bcbcbc" stroke-width="2"/></svg>
<svg class="b" style="left:1533px;top:918px;" width="8" height="12" viewBox="0 0 8 12"><path d="M1 0.8 L6.6 6 L1 11.2" fill="none" stroke="#555" stroke-width="2"/></svg>
<svg class="b" style="left:0;top:0" width="1549" height="940" viewBox="0 0 1549 940"><g fill="#dfe7ef"><polygon points="1451.3,112.6 1466.7,112.6 1459,103.6"/><polygon points="1451.3,242.8 1466.7,242.8 1459,252"/><polygon points="1393.8,171.4 1393.8,185 1384.4,178.2"/><polygon points="1524,171.4 1524,185 1533.6,178.2"/></g><g fill="none" stroke="#dfe7ef" stroke-width="4.6"><path d="M1438.2 113.8 Q1420 120 1411 130.5"/><path d="M1479.8 113.8 Q1498 120 1507 130.5"/></g><g fill="#dfe7ef"><polygon points="1405.6,136.6 1406.4,126.2 1416.4,134.6"/><polygon points="1512.4,136.6 1511.6,126.2 1501.6,134.6"/></g><path d="M1452 136.5 Q1456 134.6 1461 136 L1494 146.5 Q1499 148.6 1499 153.5 L1498.6 190 Q1498.6 194.6 1495 197.6 L1474 217.5 Q1470.5 220.6 1466 219.4 L1427 208.6 Q1421 206.6 1421 201 L1420.6 163 Q1420.6 158 1424.6 155 Z" fill="#e3eaf2"/><path d="M1456 139.6 Q1459 138.6 1462 139.6 L1486 147.4 Q1489.6 149 1486.4 151.6 L1473 161.6 Q1469 163.8 1465 162.6 L1437 153.6 Q1433.6 152 1436.6 150 Z" fill="#fff"/><path d="M1426.6 169.6 Q1426.6 166 1430.6 166.8 L1460 174.4 Q1463.6 175.6 1463.6 179.6 L1463.8 208 Q1463.6 212 1459.8 211.2 L1430 203.2 Q1426.6 202.2 1426.6 198.6 Z" fill="#fff"/><path d="M1473.4 181 Q1473.4 177.6 1476 175.4 L1489 163.6 Q1492.4 161 1492.4 165 L1492.2 188 Q1492 191.4 1489.6 193.6 L1477 205.6 Q1473.6 208.4 1473.6 204 Z" fill="#fff"/><ellipse cx="1427.6" cy="160" rx="2.6" ry="4" fill="#fff" transform="rotate(35 1427.6 160)"/><circle cx="1468" cy="170" r="5.4" fill="#fff"/><ellipse cx="1493.4" cy="152" rx="2" ry="3.6" fill="#fff" transform="rotate(-30 1493.4 152)"/><ellipse cx="1468" cy="214" rx="5" ry="2.2" fill="#fff" transform="rotate(-20 1468 214)"/><path d="M1447.6 161 V170" stroke="#fff" stroke-width="1.2"/><path d="M1466 184.6 L1473 187.6" stroke="#fff" stroke-width="1.2"/><path d="M1417.3 209.7 L1446.8 184" stroke="#a6dca6" stroke-width="1.1"/><path d="M1417.3 209.7 L1426.6 201.6" stroke="#2aa02a" stroke-width="1.4"/><path d="M1417.3 158.7 V209.7" stroke="#2222dd" stroke-width="1.3"/><path d="M1417.3 209.7 L1468.5 224.7" stroke="#e02626" stroke-width="1.3"/><text x="1413.2" y="155.2" font-size="13.5" fill="#2222dd" font-family="Liberation Sans, sans-serif" textLength="8.6" lengthAdjust="spacingAndGlyphs">Z</text><text x="1472.8" y="232.2" font-size="13.5" fill="#e02626" font-family="Liberation Sans, sans-serif" textLength="8" lengthAdjust="spacingAndGlyphs">X</text><text x="1448.2" y="185.2" font-size="12.5" fill="#a6dca6" font-family="Liberation Sans, sans-serif" textLength="7" lengthAdjust="spacingAndGlyphs">Y</text><text transform="translate(1431.6,191) skewY(15)" font-size="11.5" fill="#333" font-family="Liberation Sans, sans-serif" textLength="25.4" lengthAdjust="spacingAndGlyphs">Front</text><text transform="translate(1450.6,150.4) rotate(20) skewX(-28)" font-size="9" fill="#333" font-family="Liberation Sans, sans-serif" textLength="16.6" lengthAdjust="spacingAndGlyphs">Top</text><text transform="translate(1477.4,194.6) skewY(-46)" font-size="9.6" fill="#333" font-family="Liberation Sans, sans-serif" textLength="15" lengthAdjust="spacingAndGlyphs">Right</text><g stroke="#333" stroke-width="0.9" stroke-linejoin="round"><polygon points="1504.4,235 1513.4,238 1513.4,248.6 1504.6,252.6 1495.4,248.4 1495.2,238.4" fill="#bdbdbd"/><polygon points="1504.4,235 1513.4,238 1504.6,242 1495.2,238.4" fill="#f4f4f4"/><polygon points="1495.2,238.4 1504.6,242 1504.6,252.6 1495.4,248.4" fill="#9a9a9a"/></g><polygon points="1521,242 1529,242 1525,246" fill="#2b2b2b"/></svg>
<svg class="b" style="left:0;top:0" width="1549" height="940" viewBox="0 0 1549 940"><defs><radialGradient id="ball" cx="0.6" cy="0.42" r="0.62"><stop offset="0" stop-color="#fff"/><stop offset="0.1" stop-color="#a8a8a8"/><stop offset="0.35" stop-color="#4c4c4c"/><stop offset="1" stop-color="#2f2f2f"/></radialGradient><linearGradient id="inner" x1="0.6" y1="0" x2="0.3" y2="1"><stop offset="0" stop-color="#315c66"/><stop offset="0.55" stop-color="#3f7886"/><stop offset="1" stop-color="#4f909f"/></linearGradient><linearGradient id="wcyl" x1="0" y1="0" x2="1" y2="0.7"><stop offset="0" stop-color="#f6f6f6"/><stop offset="0.55" stop-color="#e4e4e4"/><stop offset="1" stop-color="#b8b8b8"/></linearGradient><linearGradient id="slotend" x1="0" y1="0" x2="1" y2="0.4"><stop offset="0" stop-color="#4a8a99"/><stop offset="0.5" stop-color="#2f5a64"/><stop offset="1" stop-color="#24434b"/></linearGradient><linearGradient id="blade" x1="0" y1="0" x2="1" y2="0.3"><stop offset="0" stop-color="#333"/><stop offset="0.6" stop-color="#8a8a8a"/><stop offset="1" stop-color="#444"/></linearGradient><linearGradient id="hub" x1="0" y1="0" x2="1" y2="1"><stop offset="0" stop-color="#333"/><stop offset="0.6" stop-color="#4d4d4d"/><stop offset="1" stop-color="#3a3a3a"/></linearGradient></defs><path d="M537 641 Q534 650 536 662 Q540 676 556 682 L722 732 L722 701.5 L556 655 Z" fill="#2b4f56" stroke="#06151a" stroke-width="1.0" stroke-linejoin="round" /><path d="M537 641 Q533 650 536 662 Q540 676 556 682 L556 655 Q538 651 537 641 Z" fill="#2f5861"  stroke-linejoin="round" /><path d="M556 655 L556 682" fill="none" stroke="#06151a" stroke-width="0.6" stroke-linecap="round" /><polygon points="722.0,701.5 741.0,688.5 741.0,718.0 722.0,732.0" fill="#447e88" stroke="#06151a" stroke-width="1.0" stroke-linejoin="round" /><path d="M741 688.5 Q750 681 766 681 Q781 680 788 694 L766 714 Q757 708 741 718 Z" fill="url(#slotend)" stroke="#06151a" stroke-width="1.0" stroke-linejoin="round" /><polygon points="765.0,715.0 931.0,762.0 931.0,793.0 765.0,744.0" fill="#2b4f56" stroke="#06151a" stroke-width="1.0" stroke-linejoin="round" /><path d="M931 762 Q962 768 984 756 L984 785 Q960 798 931 793 Z" fill="#3a7382" stroke="#06151a" stroke-width="1.0" stroke-linejoin="round" /><path d="M984 756 L1199 572 Q1205 568 1206 563 L1206.5 588 Q1205 592 1199 597 L984 785 Z" fill="#447e88" stroke="#06151a" stroke-width="1.0" stroke-linejoin="round" /><path d="M542.8 630.7 L620.7 563.6 L760 450 L1080 514 L1188 545 Q1203 551 1206 563 Q1205 568 1199 572 L984 756 Q962 768 931 762 L765 715 L788 694 Q781 680 766 681 Q750 681 741 688.5 L722 701.5 L556 655 Q534 650 537 641 Q538 635 542.8 630.7 Z" fill="#4e8d98" stroke="#06151a" stroke-width="1.0" stroke-linejoin="round" /><path d="M537 641 Q535 651 556 655 L722 701.5 L722 707 L556 660.5 Q534 656 535.5 646 Z" fill="#43818f" stroke="#06151a" stroke-width="0.5" stroke-linejoin="round" /><polygon points="765.0,715.0 931.0,762.0 931.0,767.5 765.0,720.5" fill="#43818f" stroke="#06151a" stroke-width="0.5" stroke-linejoin="round" /><path d="M931 762 Q962 768 984 756 L1199 572 L1201 577 L985 761.5 Q962 773.5 931 767.5 Z" fill="#4a8c9b" stroke="#06151a" stroke-width="0.5" stroke-linejoin="round" /><path d="M545.5 633.5 L622 567" fill="none" stroke="#06151a" stroke-width="0.5" stroke-linecap="round" /><path d="M546 636 Q541 642 545 648 Q549 652 558 654" fill="none" stroke="#06151a" stroke-width="0.5" stroke-linecap="round" /><path d="M708.5 646 L743 613 L832.4 640 C833.7 642.0 835.8 647.2 840.0 651.7 C844.2 656.2 851.8 663.5 857.6 667.0 C863.4 670.5 870.5 671.7 875.0 673.0 C879.5 674.3 883.1 674.7 884.7 675.0 L884.7 700 C878.2 698.3 856.3 694.5 846.0 690.0 C835.7 685.5 829.9 677.8 822.7 673.0 C815.5 668.2 811.1 664.2 803.0 661.0 C794.9 657.8 785.2 654.8 774.0 653.6 C762.8 652.4 746.5 654.9 735.6 653.6 C724.7 652.3 713.0 647.3 708.5 646.0 Z" fill="#fff" stroke="#06151a" stroke-width="0.7" stroke-linejoin="round" /><path d="M563.8 632 Q561 622 568 627 L568 626 L625.8 576 L660 560 L660 600 L606.6 641 Q596 647 587.5 643 Q570 642 563.8 632 Z" fill="#447e88" stroke="#06151a" stroke-width="1.0" stroke-linejoin="round" /><path d="M564.5 631 Q563 624 569.5 627 L626.5 577.5" fill="none" stroke="#a6e4ee" stroke-width="2.6" stroke-linejoin="round" /><path d="M587.5 642.8 L633.4 603.2 L660 590 L660 600 L606.6 641 Q597 646 587.5 642.8 Z" fill="#fff" stroke="#06151a" stroke-width="0.6" stroke-linejoin="round" /><path d="M1050.7 634.9 Q1049 630 1053.6 627 L1133 561.3 Q1142 555 1152.4 555.5 Q1166 556 1171.8 561.3 Q1178 566 1177.6 573 L1094.3 642.7 Q1088 647 1080 647.5 Q1058 648 1050.7 634.9 Z" fill="#447e88" stroke="#06151a" stroke-width="1.0" stroke-linejoin="round" /><path d="M1136 565.2 Q1144 559 1154 559 Q1166 560 1171.8 567 L1173.7 573.9 L1154.4 586.5 L1136 590.4 Z" fill="url(#slotend)" stroke="#06151a" stroke-width="0.5" stroke-linejoin="round" /><path d="M1073 646.5 L1136 590.7 L1154.4 586.9 L1158.2 589.4 L1092.4 642.7 Q1084 647 1073 646.5 Z" fill="#fff" stroke="#06151a" stroke-width="0.6" stroke-linejoin="round" /><path d="M1051.5 634 Q1050 629.5 1054.5 626.5 L1134 561" fill="none" stroke="#77bcc8" stroke-width="2" stroke-linejoin="round" /><path d="M933 736 Q931 731 936 727 L1014.9 664 Q1022 658 1032 658 Q1046 658.5 1053 664 Q1059 669 1058.5 675.6 L975 744 Q968 749 960 749 Q940 750 933 736 Z" fill="#447e88" stroke="#06151a" stroke-width="1.0" stroke-linejoin="round" /><path d="M1017.8 665.9 Q1026 661 1034 661 Q1046 662 1053.6 669.8 L1055.6 676.5 L1036.2 689 L1017.8 693 Z" fill="url(#slotend)" stroke="#06151a" stroke-width="0.5" stroke-linejoin="round" /><path d="M954 749 L1017.8 693.4 L1036.2 689.5 L1040 691 L973 744.6 Q964 749.6 954 749 Z" fill="#fff" stroke="#06151a" stroke-width="0.6" stroke-linejoin="round" /><path d="M933.8 735 Q932 730.6 937 726.6 L1015.5 663.6" fill="none" stroke="#77bcc8" stroke-width="2" stroke-linejoin="round" /><path d="M1080.8 584 L928 716" fill="none" stroke="#06151a" stroke-width="0.6" stroke-linecap="round" /><path d="M1084 586 L938 712" fill="none" stroke="#77bcc8" stroke-width="1.2" stroke-linecap="round" /><path d="M1199 572 L1178 575" fill="none" stroke="#06151a" stroke-width="0.5" stroke-linecap="round" /><polygon points="634.0,590.0 634.0,637.0 671.8,650.0 671.8,610.0" fill="#2b4f56" stroke="#06151a" stroke-width="1.0" stroke-linejoin="round" /><polygon points="671.8,608.0 671.8,650.0 685.0,639.6 685.0,600.0" fill="#447e88" stroke="#06151a" stroke-width="1.0" stroke-linejoin="round" /><path d="M634 637 L671.8 650 L685 639.6" fill="none" stroke="#77bcc8" stroke-width="1.6" stroke-linecap="round" /><polygon points="884.0,640.0 884.0,708.0 918.0,720.0 918.0,650.0" fill="#2b4f56" stroke="#06151a" stroke-width="1.0" stroke-linejoin="round" /><polygon points="918.0,650.0 918.0,720.0 928.0,716.0 928.0,660.0" fill="#447e88" stroke="#06151a" stroke-width="1.0" stroke-linejoin="round" /><path d="M884 708 L918 720 L928 716" fill="none" stroke="#77bcc8" stroke-width="1.6" stroke-linecap="round" /><polygon points="1057.7,451.0 1072.0,436.0 1078.5,441.3 1080.0,586.0 1000.0,650.0 940.0,694.0 918.0,690.0 918.0,654.0" fill="#447e88" stroke="#06151a" stroke-width="1.0" stroke-linejoin="round" /><path d="M1079.5 442 L1080 585" fill="none" stroke="#06151a" stroke-width="0.7" stroke-linecap="round" /><polygon points="954.0,480.0 1050.0,397.0 1060.0,392.0 1062.0,302.0 1096.0,275.0 1096.0,428.0 1079.0,442.0 1076.0,437.0 1042.1,427.4 1005.7,455.6 988.0,466.0 986.0,474.0 982.0,506.0 972.0,534.0 960.0,560.0 944.0,588.0 924.0,610.0 912.0,582.0 860.0,580.0 870.0,568.0 842.0,578.0 842.0,520.0 886.0,540.0" fill="#447e88" stroke="#06151a" stroke-width="1.0" stroke-linejoin="round" /><path d="M886 540 L988 466 L1005.7 455.6 L1042.1 427.4" fill="none" stroke="#06151a" stroke-width="0.7" stroke-linecap="round" /><path d="M888 541.5 L989 468" fill="none" stroke="#77bcc8" stroke-width="1.1" stroke-linecap="round" /><polygon points="618.7,534.2 639.8,540.0 639.8,524.0 705.0,542.3 772.4,561.6 837.0,580.0 837.0,594.6 859.5,599.4 861.0,615.0 863.4,628.5 868.0,642.0 875.0,655.6 884.7,675.0 875.0,673.0 857.6,667.0 840.0,651.7 832.4,640.0 743.0,613.0 735.6,611.0 708.5,618.8 681.0,620.0 664.0,613.0 648.4,601.0 631.0,578.0 621.3,553.0" fill="#2b4f56" stroke="#06151a" stroke-width="1.0" stroke-linejoin="round" /><polygon points="735.6,611.0 743.0,613.0 708.5,646.0 690.0,640.0 685.0,628.0 700.0,620.0" fill="#4e8d98"  stroke-linejoin="round" /><polygon points="608.7,508.3 637.4,515.5 637.4,522.2 623.5,527.4 618.7,531.3 618.7,534.2 621.3,553.0 626.0,568.0 619.0,552.0 614.9,539.0 610.6,523.6" fill="#262626" stroke="#06151a" stroke-width="0.6" stroke-linejoin="round" /><polygon points="608.7,507.3 621.6,496.3 637.4,501.0 637.4,515.5" fill="#4e8d98" stroke="#06151a" stroke-width="1.0" stroke-linejoin="round" /><polygon points="618.7,531.3 623.5,527.4 637.9,523.6 639.8,540.0 618.7,534.2" fill="#4e8d98" stroke="#06151a" stroke-width="0.7" stroke-linejoin="round" /><path d="M665.0 591.7 C667.1 594.6 671.5 604.6 677.5 609.0 C683.5 613.4 693.0 617.1 700.7 617.8 C708.5 618.5 718.2 614.8 724.0 613.0 C729.8 611.2 733.7 608.0 735.6 607.0 C733.0 607.5 726.4 610.2 720.0 610.0 C713.6 609.8 703.7 608.0 697.0 606.0 C690.3 604.0 685.3 600.4 680.0 598.0 C674.7 595.6 667.5 592.8 665.0 591.7 Z" fill="#4e8d98" stroke="#06151a" stroke-width="0.6" stroke-linejoin="round" /><path d="M704.6 542.3 C703.6 545.0 698.1 552.1 698.8 558.7 C699.4 565.3 703.0 575.0 708.5 582.0 C714.0 589.0 724.0 596.8 731.7 601.0 C739.5 605.2 748.5 607.0 755.0 607.0 C761.5 607.0 766.6 604.8 770.4 601.0 C774.2 597.2 777.7 590.6 778.0 584.0 C778.3 577.4 773.3 565.3 772.4 561.6" fill="none" stroke="#06151a" stroke-width="0.7" stroke-linecap="round" /><path d="M707.0 545.0 C706.3 547.5 702.2 554.0 703.0 560.0 C703.8 566.0 707.0 574.8 712.0 581.0 C717.0 587.2 726.0 593.5 733.0 597.0 C740.0 600.5 748.3 602.0 754.0 602.0 C759.7 602.0 763.8 600.3 767.0 597.0 C770.2 593.7 772.7 587.7 773.0 582.0 C773.3 576.3 769.7 566.2 769.0 563.0" fill="none" stroke="#3d7685" stroke-width="0.9" stroke-linecap="round" /><path d="M988.0 466.0 C987.7 467.3 987.0 467.3 986.0 474.0 C985.0 480.7 984.3 496.0 982.0 506.0 C979.7 516.0 975.7 525.0 972.0 534.0 C968.3 543.0 964.7 551.0 960.0 560.0 C955.3 569.0 950.0 579.7 944.0 588.0 C938.0 596.3 927.3 606.3 924.0 610.0 L942 628 C943.5 628.8 947.4 632.5 951.0 633.0 C954.6 633.5 958.3 633.7 963.6 631.0 C968.9 628.3 976.6 624.0 983.0 617.0 C989.4 610.0 996.5 598.7 1002.0 589.0 C1007.5 579.3 1012.0 570.0 1016.0 559.0 C1020.0 548.0 1023.7 536.2 1026.0 523.0 C1028.3 509.8 1029.3 487.2 1030.0 480.0 Z" fill="url(#inner)" stroke="#06151a" stroke-width="1.0" stroke-linejoin="round" /><path d="M990.0 468.0 C989.7 469.3 989.0 469.7 988.0 476.0 C987.0 482.3 986.3 496.3 984.0 506.0 C981.7 515.7 977.7 525.0 974.0 534.0 C970.3 543.0 966.7 551.0 962.0 560.0 C957.3 569.0 951.8 579.8 946.0 588.0 C940.2 596.2 930.2 605.5 927.0 609.0" fill="none" stroke="#77bcc8" stroke-width="1.3" stroke-linecap="round" /><polygon points="988.0,466.0 1005.7,455.6 1042.1,427.4 1074.7,436.5 1078.5,441.3 1057.7,451.0 1043.8,467.7 1030.0,480.0" fill="#4e8d98" stroke="#06151a" stroke-width="1.0" stroke-linejoin="round" /><path d="M1005.7 455.6 L1041.2 464.3" fill="none" stroke="#06151a" stroke-width="0.7" stroke-linecap="round" /><polygon points="1024.0,441.4 1039.5,445.2 1038.5,447.4 1027.0,444.6 1006.5,455.6 1005.0,454.6" fill="#10181a"  stroke-linejoin="round" /><path d="M942.0 628.0 C943.5 628.8 947.4 632.5 951.0 633.0 C954.6 633.5 958.3 633.7 963.6 631.0 C968.9 628.3 976.6 624.0 983.0 617.0 C989.4 610.0 996.5 598.7 1002.0 589.0 C1007.5 579.3 1012.0 570.0 1016.0 559.0 C1020.0 548.0 1023.7 536.2 1026.0 523.0 C1028.3 509.8 1029.3 487.2 1030.0 480.0 L1043.8 467.7 L1057.7 451 C1058.1 458.3 1061.2 479.3 1060.0 495.0 C1058.8 510.7 1055.3 528.8 1050.8 545.0 C1046.3 561.2 1039.5 577.7 1032.8 592.0 C1026.1 606.3 1018.9 619.5 1010.6 631.0 C1002.3 642.5 992.2 652.7 983.0 661.0 C973.8 669.3 963.6 676.3 955.3 680.7 C947.0 685.1 939.2 686.7 933.0 687.6 C926.8 688.5 920.5 686.3 918.0 686.0 L918 654 L942.9 651.6 Z" fill="#555" stroke="#06151a" stroke-width="1.0" stroke-linejoin="round" /><path d="M1053.5 457.0 C1053.8 463.3 1056.7 480.5 1055.5 495.0 C1054.3 509.5 1051.0 528.2 1046.5 544.0 C1042.0 559.8 1035.2 576.0 1028.5 590.0 C1021.8 604.0 1014.6 616.8 1006.5 628.0 C998.4 639.2 988.8 649.0 980.0 657.0 C971.2 665.0 961.5 671.7 953.5 676.0 C945.5 680.3 937.8 682.0 932.0 683.0 C926.2 684.0 921.2 682.2 919.0 682.0" fill="none" stroke="#2e2e2e" stroke-width="1.6" stroke-linecap="round" /><ellipse cx="1049.4" cy="469" rx="2.6" ry="3.4" fill="#4a4a4a" stroke="#222" stroke-width="0.6"/><text transform="translate(930.0,678.0) rotate(-72)" font-size="8" font-weight="bold" font-style="italic" fill="#0a0a0a" font-family="Liberation Sans, sans-serif" text-anchor="middle">0°</text><text transform="translate(944.0,677.0) rotate(-70)" font-size="8" font-weight="bold" font-style="italic" fill="#0a0a0a" font-family="Liberation Sans, sans-serif" text-anchor="middle">10°</text><text transform="translate(958.0,670.0) rotate(-64)" font-size="8" font-weight="bold" font-style="italic" fill="#0a0a0a" font-family="Liberation Sans, sans-serif" text-anchor="middle">20°</text><text transform="translate(972.0,660.0) rotate(-58)" font-size="8" font-weight="bold" font-style="italic" fill="#0a0a0a" font-family="Liberation Sans, sans-serif" text-anchor="middle">30°</text><text transform="translate(986.0,643.5) rotate(-56)" font-size="8" font-weight="bold" font-style="italic" fill="#0a0a0a" font-family="Liberation Sans, sans-serif" text-anchor="middle">40°</text><text transform="translate(1000.0,623.0) rotate(-58)" font-size="8" font-weight="bold" font-style="italic" fill="#0a0a0a" font-family="Liberation Sans, sans-serif" text-anchor="middle">50°</text><text transform="translate(1014.0,602.0) rotate(-64)" font-size="8" font-weight="bold" font-style="italic" fill="#0a0a0a" font-family="Liberation Sans, sans-serif" text-anchor="middle">60°</text><text transform="translate(1025.0,576.0) rotate(-68)" font-size="8" font-weight="bold" font-style="italic" fill="#0a0a0a" font-family="Liberation Sans, sans-serif" text-anchor="middle">70°</text><text transform="translate(1035.0,549.5) rotate(-72)" font-size="8" font-weight="bold" font-style="italic" fill="#0a0a0a" font-family="Liberation Sans, sans-serif" text-anchor="middle">80°</text><text transform="translate(1043.0,522.0) rotate(-76)" font-size="8" font-weight="bold" font-style="italic" fill="#0a0a0a" font-family="Liberation Sans, sans-serif" text-anchor="middle">90°</text><path d="M931.5 665 L934 657 M937 663 L938 659 M942.5 664 L944 657 M949 661 L949.5 657 M955 659 L955.5 653 M961 656 L960.5 652 M968 652 L966 646 M981 640 L977 634" fill="none" stroke="#111" stroke-width="0.8" stroke-linecap="round" /><path d="M915.0 581.7 C915.6 584.4 916.5 592.6 918.5 597.8 C920.5 603.0 923.6 608.7 927.0 613.0 C930.4 617.3 937.0 621.7 939.0 623.4 L942.3 653 L917.6 651.5 C917.4 642.9 914.0 635.7 911.7 630.0 C909.4 624.3 906.5 617.8 904.9 611.5 C903.3 605.2 902.7 595.2 902.3 592.0 Z" fill="#5a5a5a" stroke="#06151a" stroke-width="1.0" stroke-linejoin="round" /><path d="M861.5 581.7 C861.6 586.1 861.0 599.4 862.3 608.0 C863.5 616.6 865.9 625.1 869.0 633.6 C872.1 642.1 876.2 651.1 881.0 659.0 C885.8 666.9 895.2 677.3 898.0 681.0 L899.8 677.8 L893 659 L886 641 L918.5 650.6 C917.4 642.9 914.0 635.7 911.7 630.0 C909.4 624.3 906.5 617.8 904.9 611.5 C903.3 605.2 902.7 595.2 902.3 592.0 Z" fill="#3a3a3a" stroke="#06151a" stroke-width="1.0" stroke-linejoin="round" /><polygon points="863.0,600.0 875.0,625.0 886.0,641.0 893.0,659.0 899.8,677.8 898.0,681.0 881.0,659.0 869.0,633.6 862.3,608.0" fill="url(#blade)"  stroke-linejoin="round" /><polygon points="861.5,580.8 871.7,569.8 915.0,580.8 902.3,591.5" fill="#4e8d98" stroke="#06151a" stroke-width="1.0" stroke-linejoin="round" /><polygon points="942.0,626.0 952.0,628.0 943.0,654.0" fill="#e0e0e0" stroke="#06151a" stroke-width="0.5" stroke-linejoin="round" /><ellipse cx="946" cy="624.5" rx="4.5" ry="2.4" fill="#cfd6da" stroke="#333" stroke-width="0.5"/><polygon points="837.0,594.6 871.0,566.5 874.0,569.0 859.5,599.4" fill="#4e8d98"  stroke-linejoin="round" /><path d="M837 594.6 L871 566.5" fill="none" stroke="#06151a" stroke-width="0.6" stroke-linecap="round" /><polygon points="971.5,206.2 1032.0,224.0 1014.0,248.4 958.9,232.4" fill="#3a3a3a" stroke="#06151a" stroke-width="1.0" stroke-linejoin="round" /><polygon points="1072.7,237.0 1147.8,256.0 1139.6,284.8 1070.0,265.0" fill="#3a3a3a" stroke="#06151a" stroke-width="1.0" stroke-linejoin="round" /><path d="M1013 246 Q1016 230 1034 216 Q1050 204 1066 207 Q1084 212 1090 234 L1091 244 L1082 262 L1066 272 L1020 262 Z" fill="url(#hub)" stroke="#06151a" stroke-width="0.8" stroke-linejoin="round" /><ellipse cx="1040" cy="254" rx="28" ry="23" fill="#414141" stroke="#222" stroke-width="0.7" transform="rotate(24 1040 254)"/><ellipse cx="1033" cy="258" rx="17" ry="12" fill="#2c2c2c" stroke="#555" stroke-width="0.6" transform="rotate(18 1033 258)"/><circle cx="949.8" cy="213.4" r="22.4" fill="url(#ball)" stroke="#06151a" stroke-width="0.6"/><circle cx="1163.1" cy="275.8" r="23.5" fill="url(#ball)" stroke="#06151a" stroke-width="0.6"/><polygon points="860.0,245.0 1058.0,303.0 1062.0,302.0 1062.0,392.0 1050.0,396.0 996.0,379.0 996.0,420.0 900.0,420.0 860.0,400.0" fill="#2b4f56" stroke="#06151a" stroke-width="1.0" stroke-linejoin="round" /><path d="M1060.5 304 L1060.5 390" fill="none" stroke="#77bcc8" stroke-width="1.6" stroke-linecap="round" /><path d="M1062 302 L1062 392" fill="none" stroke="#06151a" stroke-width="0.6" stroke-linecap="round" /><polygon points="860.0,245.0 892.0,217.0 1096.0,275.0 1062.0,302.0 1058.0,303.0" fill="#4e8d98" stroke="#06151a" stroke-width="1.0" stroke-linejoin="round" /><polygon points="864.4,242.4 894.6,216.4 1093.3,272.6 1060.8,298.2" fill="#b5b5b5" stroke="#06151a" stroke-width="0.6" stroke-linejoin="round" /><polygon points="860.0,329.5 901.0,341.5 898.0,346.5 860.0,335.0" fill="#3a7380" stroke="#06151a" stroke-width="0.5" stroke-linejoin="round" /><path d="M891 250.5 L916 257.5 L914.5 284 Q912 291 907 291.4 Q902 291 899 284 Z" fill="#7a7a7a" stroke="#06151a" stroke-width="0.6" stroke-linejoin="round" /><polygon points="891.0,250.5 916.0,257.5 914.0,263.0 893.0,257.0" fill="#b0b0b0"  stroke-linejoin="round" /><path d="M1004 284 L1030.6 291.6 L1020 316 Q1016 322 1012 321.4 Q1007 320 1005.5 313 Z" fill="#7a7a7a" stroke="#06151a" stroke-width="0.6" stroke-linejoin="round" /><polygon points="1004.0,284.0 1030.6,291.6 1028.0,297.0 1004.5,290.5" fill="#b0b0b0"  stroke-linejoin="round" /><polygon points="850.0,334.0 900.0,345.0 862.0,380.0 812.0,369.0" fill="#606060" stroke="#06151a" stroke-width="1.0" stroke-linejoin="round" /><polygon points="954.0,414.0 996.0,379.0 1050.0,395.0 1050.0,397.0 954.0,480.0" fill="#606060" stroke="#06151a" stroke-width="1.0" stroke-linejoin="round" /><polygon points="996.0,370.0 996.0,379.0 1050.0,396.0 1058.0,391.0" fill="#4e8d98" stroke="#06151a" stroke-width="0.6" stroke-linejoin="round" /><polygon points="886.0,500.0 920.0,510.0 928.0,502.0 954.0,480.0 886.0,540.0" fill="#585858"  stroke-linejoin="round" /><polygon points="812.0,369.0 840.0,366.0 872.0,380.0 912.0,399.0 908.0,404.0 826.0,376.0" fill="#4e8d98"  stroke-linejoin="round" /><polygon points="725.0,361.0 737.0,348.0 780.0,359.0 830.0,372.0 908.0,402.0 936.0,408.0 954.0,412.0 928.0,420.0" fill="#4e8d98" stroke="#06151a" stroke-width="1.0" stroke-linejoin="round" /><polygon points="828.0,374.0 834.0,369.0 905.0,384.0 910.0,399.0 862.0,380.0" fill="#4e8d98" stroke="#06151a" stroke-width="0.6" stroke-linejoin="round" /><polygon points="928.0,420.0 954.0,412.0 954.0,480.0 928.0,503.0" fill="#447e88" stroke="#06151a" stroke-width="1.0" stroke-linejoin="round" /><path d="M929.5 421 L929.5 501" fill="none" stroke="#77bcc8" stroke-width="1.2" stroke-linecap="round" /><circle cx="802.8" cy="350.6" r="13" fill="url(#ball)" stroke="#06151a" stroke-width="0.6"/><polygon points="780.0,358.0 786.0,352.0 820.0,361.0 812.0,367.0" fill="#4e8d98" stroke="#06151a" stroke-width="0.6" stroke-linejoin="round" /><path d="M952 363.3 Q966 362.5 974 373 Q980.5 383 977.5 391 L955 413 L936 408 L909.3 399.3 Z" fill="url(#wcyl)" stroke="#06151a" stroke-width="0.6" stroke-linejoin="round" /><path d="M945.2 304 Q953 299 962 302 Q976.5 306.5 979.8 320 Q981 327 978.4 331.5 L909.3 399.3 L862.2 378.5 Z" fill="#242424" stroke="#06151a" stroke-width="1.0" stroke-linejoin="round" /><path d="M941.6 307.2 Q966.5 311.8 975.4 334.4" stroke="#5e5e5e" stroke-width="0.7" fill="none"/><path d="M938.0 310.5 Q963.2 314.9 972.4 337.4" stroke="#5e5e5e" stroke-width="0.7" fill="none"/><path d="M934.4 313.7 Q959.9 318.0 969.4 340.3" stroke="#5e5e5e" stroke-width="0.7" fill="none"/><path d="M930.8 317.0 Q956.6 321.1 966.4 343.3" stroke="#5e5e5e" stroke-width="0.7" fill="none"/><path d="M927.2 320.2 Q953.3 324.2 963.4 346.2" stroke="#5e5e5e" stroke-width="0.7" fill="none"/><path d="M923.5 323.4 Q950.0 327.3 960.4 349.2" stroke="#5e5e5e" stroke-width="0.7" fill="none"/><path d="M919.9 326.7 Q946.7 330.4 957.4 352.1" stroke="#5e5e5e" stroke-width="0.7" fill="none"/><path d="M916.3 329.9 Q943.3 333.5 954.4 355.1" stroke="#5e5e5e" stroke-width="0.7" fill="none"/><path d="M912.7 333.2 Q940.0 336.6 951.4 358.0" stroke="#5e5e5e" stroke-width="0.7" fill="none"/><path d="M909.1 336.4 Q936.7 339.7 948.4 361.0" stroke="#5e5e5e" stroke-width="0.7" fill="none"/><path d="M905.5 339.6 Q933.4 342.8 945.4 363.9" stroke="#5e5e5e" stroke-width="0.7" fill="none"/><path d="M901.9 342.9 Q930.1 345.9 942.3 366.9" stroke="#5e5e5e" stroke-width="0.7" fill="none"/><path d="M898.3 346.1 Q926.8 349.0 939.3 369.8" stroke="#5e5e5e" stroke-width="0.7" fill="none"/><path d="M894.7 349.3 Q923.5 352.1 936.3 372.8" stroke="#5e5e5e" stroke-width="0.7" fill="none"/><path d="M891.1 352.6 Q920.2 355.2 933.3 375.7" stroke="#5e5e5e" stroke-width="0.7" fill="none"/><path d="M887.5 355.8 Q916.9 358.2 930.3 378.7" stroke="#5e5e5e" stroke-width="0.7" fill="none"/><path d="M883.9 359.1 Q913.6 361.3 927.3 381.6" stroke="#5e5e5e" stroke-width="0.7" fill="none"/><path d="M880.2 362.3 Q910.3 364.4 924.3 384.6" stroke="#5e5e5e" stroke-width="0.7" fill="none"/><path d="M876.6 365.5 Q907.0 367.5 921.3 387.5" stroke="#5e5e5e" stroke-width="0.7" fill="none"/><path d="M873.0 368.8 Q903.7 370.6 918.3 390.5" stroke="#5e5e5e" stroke-width="0.7" fill="none"/><path d="M869.4 372.0 Q900.4 373.7 915.3 393.4" stroke="#5e5e5e" stroke-width="0.7" fill="none"/><path d="M865.8 375.3 Q897.1 376.8 912.3 396.4" stroke="#5e5e5e" stroke-width="0.7" fill="none"/><polygon points="702.0,365.6 920.0,426.0 920.0,510.0 702.0,447.0" fill="#696969" stroke="#06151a" stroke-width="1.0" stroke-linejoin="round" /><polygon points="702.0,365.0 710.0,357.0 928.0,420.0 920.0,426.0" fill="#b8b8b8" stroke="#06151a" stroke-width="1.0" stroke-linejoin="round" /><polygon points="920.0,426.0 928.0,420.4 928.0,502.0 920.0,510.0" fill="#a8a8a8" stroke="#06151a" stroke-width="1.0" stroke-linejoin="round" /><path d="M703 366.8 L919.5 426.8" fill="none" stroke="#1a1a1a" stroke-width="1.8"  stroke-dasharray="0.9 1.7" stroke-linecap="butt"/><polygon points="660.0,402.0 878.0,464.0 878.0,548.0 660.0,486.0" fill="#4a4a4a" stroke="#06151a" stroke-width="1.0" stroke-linejoin="round" /><polygon points="659.6,401.0 668.0,393.6 886.0,456.0 878.0,464.0" fill="#b8b8b8" stroke="#06151a" stroke-width="1.0" stroke-linejoin="round" /><polygon points="878.0,464.0 886.0,456.4 886.0,538.0 878.0,548.0" fill="#a8a8a8" stroke="#06151a" stroke-width="1.0" stroke-linejoin="round" /><polygon points="871.5,466.0 878.0,464.0 878.0,548.0 871.5,547.0" fill="#3e3e3e"  stroke-linejoin="round" /><path d="M661 403.2 L877.5 464.8" fill="none" stroke="#1a1a1a" stroke-width="1.8"  stroke-dasharray="0.9 1.7" stroke-linecap="butt"/><polygon points="654.0,422.0 668.0,410.0 870.0,469.0 856.0,482.0" fill="#4e8d98" stroke="#06151a" stroke-width="1.0" stroke-linejoin="round" /><polygon points="654.0,422.0 856.0,482.0 838.0,520.0 838.0,580.0 772.4,561.6 705.0,542.3 637.6,523.8 637.6,462.0" fill="#2b4f56" stroke="#06151a" stroke-width="1.0" stroke-linejoin="round" /><polygon points="856.0,482.0 868.0,470.0 870.0,548.0 838.0,578.0 838.0,520.0" fill="#447e88" stroke="#06151a" stroke-width="1.0" stroke-linejoin="round" /><path d="M840 521 L857 484" fill="none" stroke="#77bcc8" stroke-width="1.2" stroke-linecap="round" /><polygon points="654.0,422.0 674.0,432.0 658.0,468.0 637.6,462.0" fill="#447e88" stroke="#06151a" stroke-width="1.0" stroke-linejoin="round" /><polygon points="637.6,462.0 658.0,468.0 658.0,506.0 637.6,501.0" fill="#2b4f56" stroke="#06151a" stroke-width="1.0" stroke-linejoin="round" /><polygon points="658.0,468.0 674.0,432.0 680.0,430.0 675.0,440.0 675.0,495.0 658.0,506.0" fill="#4e8d98" stroke="#06151a" stroke-width="1.0" stroke-linejoin="round" /><polygon points="675.0,440.0 680.0,430.0 828.0,473.0 818.0,514.0 818.0,536.0 675.0,495.0" fill="#2b4f56" stroke="#06151a" stroke-width="1.0" stroke-linejoin="round" /><polygon points="675.0,440.0 680.0,430.0 828.0,473.0 826.0,480.0 678.0,437.0" fill="#376f7b"  stroke-linejoin="round" /><path d="M678 437.5 L826 480.5" fill="none" stroke="#06151a" stroke-width="0.5" stroke-linecap="round" /><polygon points="658.0,506.0 675.0,495.0 818.0,536.0 818.0,556.0 812.0,556.0" fill="#4e8d98" stroke="#06151a" stroke-width="1.0" stroke-linejoin="round" /><polygon points="818.0,514.0 828.0,476.0 856.0,482.0 838.0,520.0" fill="#32616d" stroke="#06151a" stroke-width="1.0" stroke-linejoin="round" /><path d="M829.5 477.5 L819.5 514" fill="none" stroke="#77bcc8" stroke-width="1.1" stroke-linecap="round" /><ellipse cx="695.5" cy="471.0" rx="15" ry="16.5" fill="#3f7a87" stroke="#06151a" stroke-width="0.8"/><ellipse cx="698" cy="469.5" rx="12" ry="12.4" fill="#3c3c3c" stroke="#06151a" stroke-width="0.8"/><ellipse cx="697.4" cy="469.9" rx="10.6" ry="11" fill="#555" stroke="#8e8e8e" stroke-width="0.9"/><polygon points="701.9,471.0 698.7,475.2 693.8,474.2 692.1,469.2 695.3,465.0 700.2,466.0" fill="#7c7c7c" stroke="#06151a" stroke-width="0.7"/><ellipse cx="808.0" cy="503.5" rx="15" ry="16.5" fill="#3f7a87" stroke="#06151a" stroke-width="0.8"/><ellipse cx="810.5" cy="502" rx="12" ry="12.4" fill="#3c3c3c" stroke="#06151a" stroke-width="0.8"/><ellipse cx="809.9" cy="502.4" rx="10.6" ry="11" fill="#555" stroke="#8e8e8e" stroke-width="0.9"/><polygon points="814.4,503.5 811.2,507.7 806.3,506.7 804.6,501.7 807.8,497.5 812.7,498.5" fill="#7c7c7c" stroke="#06151a" stroke-width="0.7"/><ellipse cx="738" cy="573" rx="18.5" ry="20" fill="#3a6f7c" stroke="#06151a" stroke-width="0.8"/><ellipse cx="739" cy="574" rx="14.5" ry="16" fill="#707070" stroke="#b4b4b4" stroke-width="1.5"/><ellipse cx="739" cy="574" rx="15.5" ry="17" fill="none" stroke="#222" stroke-width="0.6"/><path d="M860 332 L860 245 L892 217 L1096 275 L1096 428 L1078.5 442 L1080 586" fill="none" stroke="#050d10" stroke-width="1.5" stroke-linecap="round" /><path d="M537 641 Q533.5 650 535.5 662 Q540 676 556 682 L722 732 L741 718" fill="none" stroke="#050d10" stroke-width="1.5" stroke-linecap="round" /><path d="M765 715 L765 744 L931 793 Q960 798 984 785 L1199 597 Q1205.5 592 1206.5 588 L1206 563 Q1203 551 1188 545 L1080 514" fill="none" stroke="#050d10" stroke-width="1.5" stroke-linecap="round" /><path d="M542.8 630.7 L620.7 563.6" fill="none" stroke="#050d10" stroke-width="1.3" stroke-linecap="round" /><path d="M702 402 L702 365.5 L710 357 M725 361 L737 348 L780 359 M659.6 401 L668 393.6 M659.8 401 L660 412 M653.5 423 L637.6 462 L637.6 501" fill="none" stroke="#050d10" stroke-width="1.3" stroke-linecap="round" /><path d="M608.7 508 L621.6 496.3 L637.4 501 M608.7 508.3 L610.6 523.6 L614.9 539 L621.3 553 L631 578 L648.4 601 L664 613" fill="none" stroke="#050d10" stroke-width="1.3" stroke-linecap="round" /><polygon points="659.0,655.0 729.0,674.0 712.0,691.0 643.0,671.0" fill="#fff" stroke="#222" stroke-width="0.8" stroke-linejoin="round" /><polygon points="696.0,664.4 729.0,674.0 724.0,678.4 691.0,669.6" fill="#f39200"  stroke-linejoin="round" /><polygon points="663.0,660.0 671.0,662.0 669.0,670.0 663.0,674.0 655.0,668.0" fill="#222"  stroke-linejoin="round" /><path d="M672 666 L680 664 M672 668 L681 670 M671 670 L677 675" fill="none" stroke="#222" stroke-width="0.8" stroke-linecap="round" /><text transform="translate(699,670.6) rotate(16)" font-size="4.6" font-weight="bold" fill="#222" font-family="Liberation Sans, sans-serif" textLength="22" lengthAdjust="spacingAndGlyphs">WARNING</text><text transform="translate(691,677.4) rotate(16)" font-size="4" font-weight="bold" fill="#222" font-family="Liberation Sans, sans-serif" textLength="24" lengthAdjust="spacingAndGlyphs">Pinch point.</text><text transform="translate(688,681) rotate(16)" font-size="3" fill="#222" font-family="Liberation Sans, sans-serif" textLength="24" lengthAdjust="spacingAndGlyphs">Keep hands clear</text><text transform="translate(686,684) rotate(16)" font-size="3" fill="#222" font-family="Liberation Sans, sans-serif" textLength="22" lengthAdjust="spacingAndGlyphs">while operating</text></svg>
</body></html>
